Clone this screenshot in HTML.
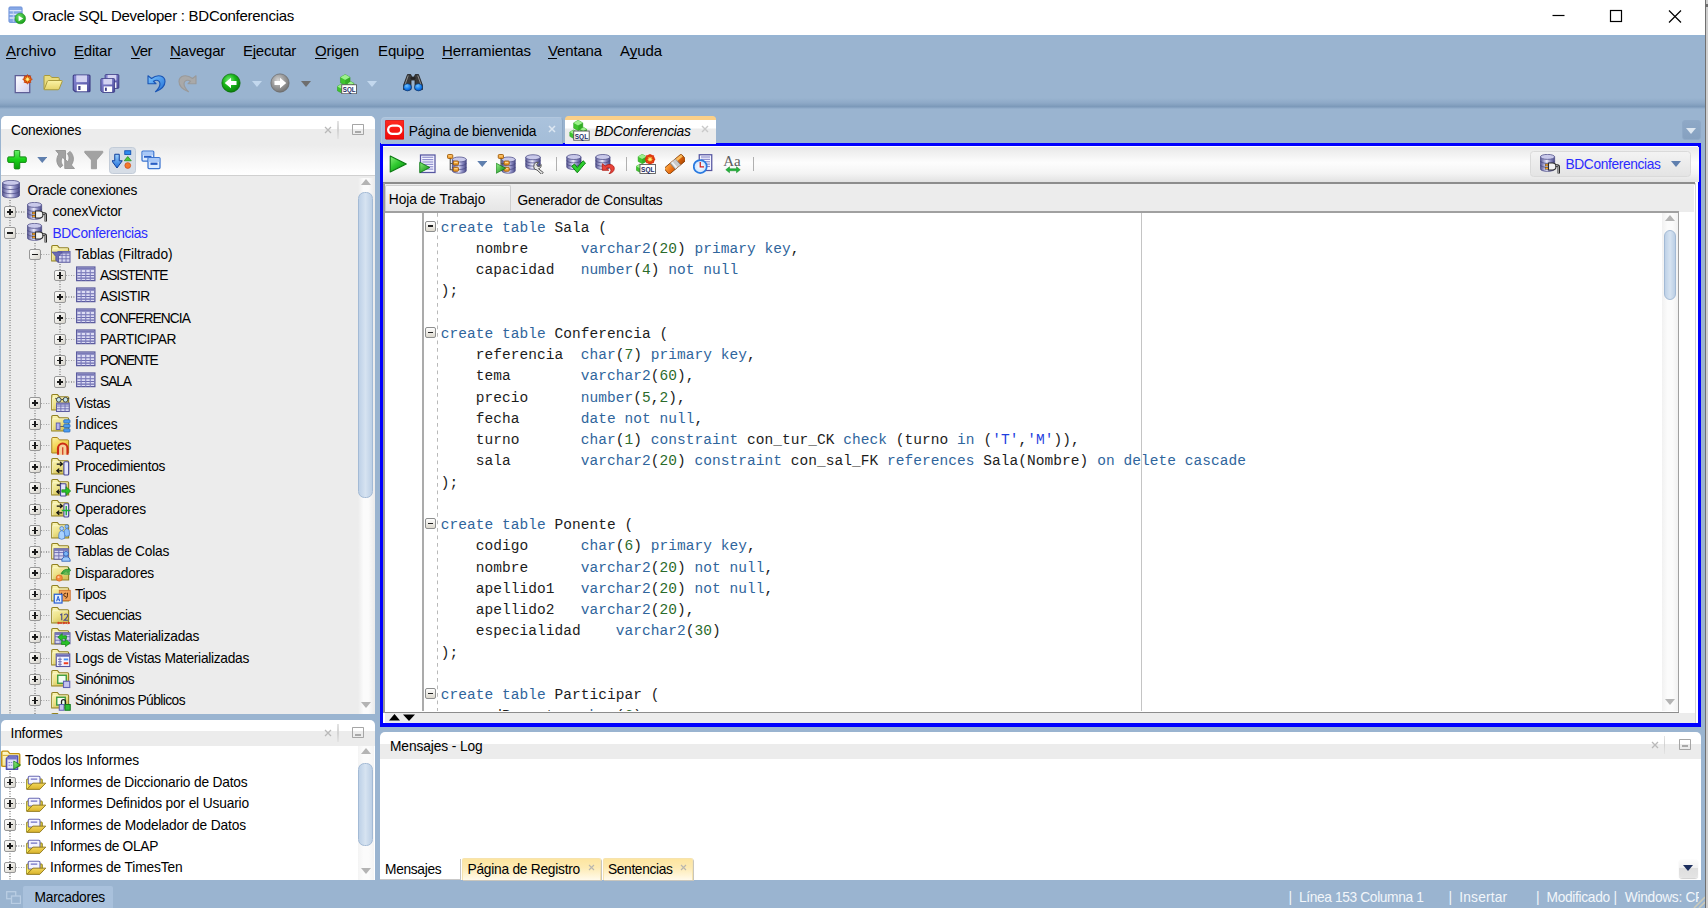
<!DOCTYPE html>
<html lang="es"><head><meta charset="utf-8"><title>Oracle SQL Developer : BDConferencias</title>
<style>
html,body{margin:0;padding:0}
body{width:1708px;height:908px;position:relative;overflow:hidden;background:#9ab4d0;font-family:"Liberation Sans", sans-serif;font-size:13.75px;color:#000}
div,span.t,svg.i{position:absolute;box-sizing:border-box}
span.t{white-space:pre;line-height:20px}
u{text-decoration:underline;text-decoration-skip-ink:none;text-decoration-thickness:1.2px;text-underline-offset:1.5px}

.ex{width:11.5px;height:11.5px;border:1px solid #979797;border-radius:2px;background:linear-gradient(135deg,#fff,#d8d5cc)}
.ex i{position:absolute;left:1.6px;top:4.05px;width:6.3px;height:1.4px;background:#1a1a1a}
.ex b{position:absolute;left:4.05px;top:1.6px;width:1.4px;height:6.3px;background:#1a1a1a}
.dv{width:1.25px;background-image:linear-gradient(#9a9a9a 50%,transparent 50%);background-size:1.25px 2.5px}
.dh{height:1.25px;background-image:linear-gradient(90deg,#9a9a9a 50%,transparent 50%);background-size:2.5px 1.25px}
.fd{width:1.25px;background-image:linear-gradient(#b9b9b9 50%,transparent 50%);background-size:1.25px 7.5px}
.code{font-family:"Liberation Mono", monospace;font-size:14.5px;letter-spacing:0.05px;line-height:21.25px;color:#1c1c1c}
.code div{position:static;height:21.25px;white-space:pre}
.k{color:#2f659c} .n{color:#2b6b2b} .s{color:#1f3fe0}
.fb{width:11px;height:11px;border:1px solid #8e8f8f;border-radius:2px;background:linear-gradient(#fff,#dcd8cd)}
.fb i{position:absolute;left:1.7px;top:3.9px;width:5.6px;height:1.3px;background:#222}

</style></head><body>
<div style="left:0px;top:0px;width:1705px;height:35.3px;background:#fff"></div>
<div style="left:0px;top:35px;width:1705px;height:1.6px;background:#96b4d3"></div>
<span class="t" style="left:32px;top:6.30px;font-size:15px;letter-spacing:-0.272px;">Oracle SQL Developer : BDConferencias</span>
<div style="left:1705px;top:0px;width:3px;height:908px;background:#cfcfcf"></div>
<div style="left:1704.5px;top:0px;width:1.5px;height:908px;background:#707070"></div>
<div style="left:1705px;top:4px;width:3px;height:2.5px;background:#6f6f6f"></div>
<svg class="i" style="left:1540px;top:0" width="160" height="34" viewBox="0 0 160 34"><g stroke="#000" stroke-width="1.2" fill="none"><path d="M12.5 15.5h12"/><rect x="70.5" y="10.5" width="11" height="11"/><path d="M129 10.5l12 12M141 10.5l-12 12"/></g></svg>
<span class="t" style="left:6px;top:41.10px;font-size:15px;letter-spacing:-0.004px;"><u>A</u>rchivo</span>
<span class="t" style="left:74px;top:41.10px;font-size:15px;letter-spacing:-0.198px;"><u>E</u>ditar</span>
<span class="t" style="left:131px;top:41.10px;font-size:15px;letter-spacing:-0.505px;"><u>V</u>er</span>
<span class="t" style="left:170px;top:41.10px;font-size:15px;letter-spacing:-0.243px;"><u>N</u>avegar</span>
<span class="t" style="left:243px;top:41.10px;font-size:15px;letter-spacing:-0.254px;">E<u>j</u>ecutar</span>
<span class="t" style="left:315px;top:41.10px;font-size:15px;letter-spacing:-0.172px;"><u>O</u>rigen</span>
<span class="t" style="left:378px;top:41.10px;font-size:15px;letter-spacing:-0.120px;">Equip<u>o</u></span>
<span class="t" style="left:442px;top:41.10px;font-size:15px;letter-spacing:-0.086px;"><u>H</u>erramientas</span>
<span class="t" style="left:548px;top:41.10px;font-size:15px;letter-spacing:-0.152px;"><u>V</u>entana</span>
<span class="t" style="left:620px;top:41.10px;font-size:15px;letter-spacing:-0.053px;">A<u>y</u>uda</span>
<div style="left:0px;top:98px;width:1705px;height:10.5px;background:linear-gradient(#9ab4d0,#8ea9c7 45%,#7c99b9 78%,#8aa6c5 90%,#9ab4d0)"></div>
<div style="left:0.8px;top:116px;width:374px;height:598px;background:#ececec;border-radius:5px 5px 0 0"></div>
<div style="left:0.8px;top:116px;width:374px;height:13px;background:#fff;border-radius:5px 5px 0 0"></div>
<div style="left:0.8px;top:145px;width:374px;height:30px;background:linear-gradient(#ececec,#fff)"></div>
<div style="left:0.8px;top:175px;width:374px;height:1px;background:#d0d0d0"></div>
<span class="t" style="left:11px;top:120.54px;letter-spacing:-0.263px;">Conexiones</span>
<div style="left:0.8px;top:719.5px;width:374px;height:160.5px;background:#fff;border-radius:5px 5px 0 0"></div>
<div style="left:0.8px;top:731.4px;width:374px;height:14.5px;background:#ececec"></div>
<span class="t" style="left:10.5px;top:723.54px;letter-spacing:-0.188px;">Informes</span>
<div style="left:379.6px;top:143.4px;width:1321.9px;height:583.4px;background:#fff"></div>
<div style="left:379.6px;top:143.4px;width:1321.9px;height:2.8px;background:#0000ff"></div>
<div style="left:379.6px;top:723.3px;width:1321.9px;height:3.5px;background:#0000ff"></div>
<div style="left:379.6px;top:143.4px;width:3.4px;height:583.4px;background:#0000ff"></div>
<div style="left:1698.3px;top:143.4px;width:3.2px;height:583.4px;background:#0000ff"></div>
<div style="left:380px;top:732.3px;width:1321px;height:148px;background:#fff;border-radius:5px 5px 0 0"></div>
<div style="left:380px;top:744.3px;width:1321px;height:14.7px;background:#ececec"></div>
<span class="t" style="left:390px;top:736.74px;letter-spacing:-0.108px;">Mensajes - Log</span>
<div style="left:1.5px;top:176px;width:356px;height:538px;overflow:hidden">
<div class="dv" style="left:7.9px;top:24px;width:1.25px;height:520px;"></div>
<div class="dv" style="left:32.9px;top:67px;width:1.25px;height:477px;"></div>
<div class="dv" style="left:57.9px;top:88px;width:1.25px;height:117.5px;"></div>
<svg class="i" style="left:0.5px;top:3.9999999999999947px;" width="20" height="20" viewBox="0 0 16 16"><defs><linearGradient id="g1_c" x1="0" y1="0" x2="1" y2="0"><stop offset="0" stop-color="#55558f"/><stop offset="0.3" stop-color="#b9b9e0"/><stop offset="0.45" stop-color="#ececfb"/><stop offset="0.7" stop-color="#8f8fc6"/><stop offset="1" stop-color="#4a4a86"/></linearGradient></defs><path d="M0.4 2.3v10.0a6.8 2.0 0 0 0 13.6 0v-10.0z" fill="url(#g1_c)" stroke="#4b4b85" stroke-width="0.6"/><ellipse cx="7.2" cy="2.3" rx="6.8" ry="2.0" fill="#c9c9ea" stroke="#4b4b85" stroke-width="0.6"/><path d="M0.4 5.633333333333333a6.8 2.0 0 0 0 13.6 0" fill="none" stroke="#45457e" stroke-width="0.7" opacity="0.8"/><path d="M0.4 8.966666666666667a6.8 2.0 0 0 0 13.6 0" fill="none" stroke="#45457e" stroke-width="0.7" opacity="0.8"/></svg>
<span class="t" style="left:26.0px;top:5.14px;letter-spacing:-0.258px;">Oracle conexiones</span>
<div class="dh" style="left:14.5px;top:35.24999999999999px;width:10.0px;height:1.25px;"></div>
<div class="ex" style="left:2.75px;top:30.099999999999994px"><i></i><b></b></div>
<svg class="i" style="left:25.5px;top:25.849999999999994px;" width="20" height="20" viewBox="0 0 16 16"><defs><linearGradient id="g2_c" x1="0" y1="0" x2="1" y2="0"><stop offset="0" stop-color="#55558f"/><stop offset="0.3" stop-color="#b9b9e0"/><stop offset="0.45" stop-color="#ececfb"/><stop offset="0.7" stop-color="#8f8fc6"/><stop offset="1" stop-color="#4a4a86"/></linearGradient></defs><path d="M0.3 2.3v9.6a5.7 2.0 0 0 0 11.4 0v-9.6z" fill="url(#g2_c)" stroke="#4b4b85" stroke-width="0.6"/><ellipse cx="6.0" cy="2.3" rx="5.7" ry="2.0" fill="#c9c9ea" stroke="#4b4b85" stroke-width="0.6"/><path d="M0.3 5.5a5.7 2.0 0 0 0 11.4 0" fill="none" stroke="#45457e" stroke-width="0.7" opacity="0.8"/><path d="M0.3 8.7a5.7 2.0 0 0 0 11.4 0" fill="none" stroke="#45457e" stroke-width="0.7" opacity="0.8"/><path d="M4 8.7h3M4 11.3h3" stroke="#3a3a3a" stroke-width="2"/><path d="M4.3 8.700h2.700M4.300 11.300h2.700" stroke="#ffa424" stroke-width="1.200"/><path d="M6.800 7.200h3.200a2.800 2.800 0 0 1 0 5.600h-3.200z" fill="#f2f2f2" stroke="#2e2e2e" stroke-width="0.9"/><path d="M12.400 9.200h1.400q1.200 0 1.200 1.200v5.200" fill="none" stroke="#2a2a2a" stroke-width="2"/><path d="M12.600 9.200h1.200q1 0 1 1.200v5" fill="none" stroke="#a9a9a9" stroke-width="0.7"/></svg>
<span class="t" style="left:51.0px;top:26.29px;letter-spacing:-0.190px;">conexVictor</span>
<div class="dh" style="left:14.5px;top:56.49999999999999px;width:10.0px;height:1.25px;"></div>
<div class="ex" style="left:2.75px;top:51.349999999999994px"><i></i></div>
<svg class="i" style="left:25.5px;top:47.099999999999994px;" width="20" height="20" viewBox="0 0 16 16"><defs><linearGradient id="g3_c" x1="0" y1="0" x2="1" y2="0"><stop offset="0" stop-color="#55558f"/><stop offset="0.3" stop-color="#b9b9e0"/><stop offset="0.45" stop-color="#ececfb"/><stop offset="0.7" stop-color="#8f8fc6"/><stop offset="1" stop-color="#4a4a86"/></linearGradient></defs><path d="M0.3 2.3v9.6a5.7 2.0 0 0 0 11.4 0v-9.6z" fill="url(#g3_c)" stroke="#4b4b85" stroke-width="0.6"/><ellipse cx="6.0" cy="2.3" rx="5.7" ry="2.0" fill="#c9c9ea" stroke="#4b4b85" stroke-width="0.6"/><path d="M0.3 5.5a5.7 2.0 0 0 0 11.4 0" fill="none" stroke="#45457e" stroke-width="0.7" opacity="0.8"/><path d="M0.3 8.7a5.7 2.0 0 0 0 11.4 0" fill="none" stroke="#45457e" stroke-width="0.7" opacity="0.8"/><path d="M4 8.7h3M4 11.3h3" stroke="#3a3a3a" stroke-width="2"/><path d="M4.3 8.700h2.700M4.300 11.300h2.700" stroke="#ffa424" stroke-width="1.200"/><path d="M6.800 7.200h3.200a2.800 2.800 0 0 1 0 5.600h-3.200z" fill="#f2f2f2" stroke="#2e2e2e" stroke-width="0.9"/><path d="M12.400 9.200h1.400q1.200 0 1.200 1.200v5.200" fill="none" stroke="#2a2a2a" stroke-width="2"/><path d="M12.600 9.200h1.200q1 0 1 1.200v5" fill="none" stroke="#a9a9a9" stroke-width="0.7"/></svg>
<span class="t" style="left:51.0px;top:47.54px;color:#2b2bff;letter-spacing:-0.366px;">BDConferencias</span>
<div class="dh" style="left:39.5px;top:77.75px;width:9.0px;height:1.25px;"></div>
<div class="ex" style="left:27.75px;top:72.6px"><i></i></div>
<svg class="i" style="left:49.5px;top:68.35px;" width="20" height="20" viewBox="0 0 16 16"><defs><linearGradient id="g4_f" x1="0" y1="0" x2="0.6" y2="1"><stop offset="0" stop-color="#fbf6b8"/><stop offset="0.55" stop-color="#eee38a"/><stop offset="1" stop-color="#d4c35a"/></linearGradient></defs><path d="M0.6 13.6V2.1q0-0.9 0.9-0.9h3.6l1.6 1.9h6.5q0.9 0 0.9 0.9v9.6z" fill="url(#g4_f)" stroke="#918020" stroke-width="0.9"/><path d="M1.2 13V3.8h12.3" fill="none" stroke="#fffde0" stroke-width="0.6" opacity="0.8"/><rect x="5.6" y="6" width="9.6" height="8.6" fill="#d5d5f0" stroke="#5b5b9e" stroke-width="0.8"/><path d="M5.6 9.096h9.6M5.6 11.847999999999999h9.6M8.864 6v8.6M12.032 6v8.6" stroke="#6b6bb0" stroke-width="0.7"/><rect x="5.6" y="6" width="9.6" height="1.72" fill="#7676b6"/><path d="M0.8 6.4h8.2l-3 3.6v4.4l-2.2-1.2v-3.2z" fill="#6a6ab4" stroke="#4a4a90" stroke-width="0.5"/></svg>
<span class="t" style="left:73.5px;top:68.79px;letter-spacing:-0.063px;">Tablas (Filtrado)</span>
<div class="dh" style="left:64.5px;top:99.00000000000003px;width:9.0px;height:1.25px;"></div>
<div class="ex" style="left:52.75px;top:93.85000000000002px"><i></i><b></b></div>
<svg class="i" style="left:74.5px;top:89.60000000000002px;" width="20" height="20" viewBox="0 0 16 16"><g transform="translate(0,-0.1)"><rect x="0.5" y="0.9" width="14.6" height="10.900" fill="#dcdcf4" stroke="#5b5b9e" stroke-width="1"/><rect x="1" y="1.4" width="13.6" height="1.7" fill="#7a7ab8"/><path d="M1 5.500h13.6M1 7.700h13.6M1 9.800h13.6" stroke="#6b6bb0" stroke-width="0.9"/><path d="M4.1 3v8.800M7.8 3v8.800M11.4 3v8.800" stroke="#7d7dbd" stroke-width="0.9"/></g></svg>
<span class="t" style="left:98.5px;top:90.04px;letter-spacing:-0.990px;">ASISTENTE</span>
<div class="dh" style="left:64.5px;top:120.25000000000003px;width:9.0px;height:1.25px;"></div>
<div class="ex" style="left:52.75px;top:115.10000000000002px"><i></i><b></b></div>
<svg class="i" style="left:74.5px;top:110.85000000000002px;" width="20" height="20" viewBox="0 0 16 16"><g transform="translate(0,-0.1)"><rect x="0.5" y="0.9" width="14.6" height="10.900" fill="#dcdcf4" stroke="#5b5b9e" stroke-width="1"/><rect x="1" y="1.4" width="13.6" height="1.7" fill="#7a7ab8"/><path d="M1 5.500h13.6M1 7.700h13.6M1 9.800h13.6" stroke="#6b6bb0" stroke-width="0.9"/><path d="M4.1 3v8.800M7.8 3v8.800M11.4 3v8.800" stroke="#7d7dbd" stroke-width="0.9"/></g></svg>
<span class="t" style="left:98.5px;top:111.29px;letter-spacing:-0.569px;">ASISTIR</span>
<div class="dh" style="left:64.5px;top:141.50000000000003px;width:9.0px;height:1.25px;"></div>
<div class="ex" style="left:52.75px;top:136.35000000000002px"><i></i><b></b></div>
<svg class="i" style="left:74.5px;top:132.10000000000002px;" width="20" height="20" viewBox="0 0 16 16"><g transform="translate(0,-0.1)"><rect x="0.5" y="0.9" width="14.6" height="10.900" fill="#dcdcf4" stroke="#5b5b9e" stroke-width="1"/><rect x="1" y="1.4" width="13.6" height="1.7" fill="#7a7ab8"/><path d="M1 5.500h13.6M1 7.700h13.6M1 9.800h13.6" stroke="#6b6bb0" stroke-width="0.9"/><path d="M4.1 3v8.800M7.8 3v8.800M11.4 3v8.800" stroke="#7d7dbd" stroke-width="0.9"/></g></svg>
<span class="t" style="left:98.5px;top:132.54px;letter-spacing:-0.916px;">CONFERENCIA</span>
<div class="dh" style="left:64.5px;top:162.75000000000003px;width:9.0px;height:1.25px;"></div>
<div class="ex" style="left:52.75px;top:157.60000000000002px"><i></i><b></b></div>
<svg class="i" style="left:74.5px;top:153.35000000000002px;" width="20" height="20" viewBox="0 0 16 16"><g transform="translate(0,-0.1)"><rect x="0.5" y="0.9" width="14.6" height="10.900" fill="#dcdcf4" stroke="#5b5b9e" stroke-width="1"/><rect x="1" y="1.4" width="13.6" height="1.7" fill="#7a7ab8"/><path d="M1 5.500h13.6M1 7.700h13.6M1 9.800h13.6" stroke="#6b6bb0" stroke-width="0.9"/><path d="M4.1 3v8.800M7.8 3v8.800M11.4 3v8.800" stroke="#7d7dbd" stroke-width="0.9"/></g></svg>
<span class="t" style="left:98.5px;top:153.79px;letter-spacing:-0.423px;">PARTICIPAR</span>
<div class="dh" style="left:64.5px;top:184.00000000000003px;width:9.0px;height:1.25px;"></div>
<div class="ex" style="left:52.75px;top:178.85000000000002px"><i></i><b></b></div>
<svg class="i" style="left:74.5px;top:174.60000000000002px;" width="20" height="20" viewBox="0 0 16 16"><g transform="translate(0,-0.1)"><rect x="0.5" y="0.9" width="14.6" height="10.900" fill="#dcdcf4" stroke="#5b5b9e" stroke-width="1"/><rect x="1" y="1.4" width="13.6" height="1.7" fill="#7a7ab8"/><path d="M1 5.500h13.6M1 7.700h13.6M1 9.800h13.6" stroke="#6b6bb0" stroke-width="0.9"/><path d="M4.1 3v8.800M7.8 3v8.800M11.4 3v8.800" stroke="#7d7dbd" stroke-width="0.9"/></g></svg>
<span class="t" style="left:98.5px;top:175.04px;letter-spacing:-1.281px;">PONENTE</span>
<div class="dh" style="left:64.5px;top:205.25000000000003px;width:9.0px;height:1.25px;"></div>
<div class="ex" style="left:52.75px;top:200.10000000000002px"><i></i><b></b></div>
<svg class="i" style="left:74.5px;top:195.85000000000002px;" width="20" height="20" viewBox="0 0 16 16"><g transform="translate(0,-0.1)"><rect x="0.5" y="0.9" width="14.6" height="10.900" fill="#dcdcf4" stroke="#5b5b9e" stroke-width="1"/><rect x="1" y="1.4" width="13.6" height="1.7" fill="#7a7ab8"/><path d="M1 5.500h13.6M1 7.700h13.6M1 9.800h13.6" stroke="#6b6bb0" stroke-width="0.9"/><path d="M4.1 3v8.800M7.8 3v8.800M11.4 3v8.800" stroke="#7d7dbd" stroke-width="0.9"/></g></svg>
<span class="t" style="left:98.5px;top:196.29px;letter-spacing:-1.043px;">SALA</span>
<div class="dh" style="left:39.5px;top:226.50000000000003px;width:9.0px;height:1.25px;"></div>
<div class="ex" style="left:27.75px;top:221.35000000000002px"><i></i><b></b></div>
<svg class="i" style="left:49.5px;top:217.10000000000002px;" width="20" height="20" viewBox="0 0 16 16"><defs><linearGradient id="g11_f" x1="0" y1="0" x2="0.6" y2="1"><stop offset="0" stop-color="#fbf6b8"/><stop offset="0.55" stop-color="#eee38a"/><stop offset="1" stop-color="#d4c35a"/></linearGradient></defs><path d="M0.6 13.6V2.1q0-0.9 0.9-0.9h3.6l1.6 1.9h6.5q0.9 0 0.9 0.9v9.6z" fill="url(#g11_f)" stroke="#918020" stroke-width="0.9"/><path d="M1.2 13V3.8h12.3" fill="none" stroke="#fffde0" stroke-width="0.6" opacity="0.8"/><rect x="4.4" y="8" width="10.2" height="6.8" fill="#d5d5f0" stroke="#5b5b9e" stroke-width="0.8"/><path d="M4.4 10.448h10.2M4.4 12.624h10.2M7.868 8v6.8M11.234 8v6.8" stroke="#6b6bb0" stroke-width="0.7"/><rect x="4.4" y="8" width="10.2" height="1.36" fill="#7676b6"/><circle cx="6.2" cy="5.4" r="1.9" fill="#bfe3ea" stroke="#444" stroke-width="0.8"/><circle cx="11.6" cy="5.4" r="1.9" fill="#bfe3ea" stroke="#444" stroke-width="0.8"/><path d="M8.1 5.2h1.6M3.4 4.2l1.2 0.6M14.6 4.2l-1.2 0.6" stroke="#444" stroke-width="0.8"/></svg>
<span class="t" style="left:73.5px;top:217.54px;letter-spacing:-0.367px;">Vistas</span>
<div class="dh" style="left:39.5px;top:247.75000000000003px;width:9.0px;height:1.25px;"></div>
<div class="ex" style="left:27.75px;top:242.60000000000002px"><i></i><b></b></div>
<svg class="i" style="left:49.5px;top:238.35000000000002px;" width="20" height="20" viewBox="0 0 16 16"><defs><linearGradient id="g12_f" x1="0" y1="0" x2="0.6" y2="1"><stop offset="0" stop-color="#fbf6b8"/><stop offset="0.55" stop-color="#eee38a"/><stop offset="1" stop-color="#d4c35a"/></linearGradient></defs><path d="M0.6 13.6V2.1q0-0.9 0.9-0.9h3.6l1.6 1.9h6.5q0.9 0 0.9 0.9v9.6z" fill="url(#g12_f)" stroke="#918020" stroke-width="0.9"/><path d="M1.2 13V3.8h12.3" fill="none" stroke="#fffde0" stroke-width="0.6" opacity="0.8"/><rect x="4.2" y="7.2" width="3" height="5.2" fill="#b3b3ee" stroke="#5555a8" stroke-width="0.7"/><path d="M7.4 10h3" stroke="#555" stroke-width="0.7"/><rect x="10.2" y="4.6" width="5" height="2.6" rx="0.6" fill="#4d9df0" stroke="#2065b8" stroke-width="0.6"/><rect x="10.2" y="8.2" width="5" height="2.6" rx="0.6" fill="#4d9df0" stroke="#2065b8" stroke-width="0.6"/><rect x="10.2" y="11.8" width="5" height="2.6" rx="0.6" fill="#4d9df0" stroke="#2065b8" stroke-width="0.6"/></svg>
<span class="t" style="left:73.5px;top:238.79px;letter-spacing:-0.154px;">Índices</span>
<div class="dh" style="left:39.5px;top:269.0px;width:9.0px;height:1.25px;"></div>
<div class="ex" style="left:27.75px;top:263.85px"><i></i><b></b></div>
<svg class="i" style="left:49.5px;top:259.6px;" width="20" height="20" viewBox="0 0 16 16"><defs><linearGradient id="g13_f" x1="0" y1="0" x2="0.6" y2="1"><stop offset="0" stop-color="#fdf3a0"/><stop offset="0.5" stop-color="#f4d75a"/><stop offset="1" stop-color="#dcae2c"/></linearGradient></defs><path d="M0.6 13.6V2.1q0-0.9 0.9-0.9h3.6l1.6 1.9h6.5q0.9 0 0.9 0.9v9.6z" fill="url(#g13_f)" stroke="#a8841f" stroke-width="0.8"/><path d="M5.6 15V9.8a3.8 3.8 0 0 1 7.6 0V15" fill="#f6cf9a" stroke="#cc2a14" stroke-width="1.7"/><path d="M9.4 9v6" stroke="#cc2a14" stroke-width="0.9"/></svg>
<span class="t" style="left:73.5px;top:260.04px;letter-spacing:-0.264px;">Paquetes</span>
<div class="dh" style="left:39.5px;top:290.25px;width:9.0px;height:1.25px;"></div>
<div class="ex" style="left:27.75px;top:285.1px"><i></i><b></b></div>
<svg class="i" style="left:49.5px;top:280.85px;" width="20" height="20" viewBox="0 0 16 16"><defs><linearGradient id="g14_f" x1="0" y1="0" x2="0.6" y2="1"><stop offset="0" stop-color="#fbf6b8"/><stop offset="0.55" stop-color="#eee38a"/><stop offset="1" stop-color="#d4c35a"/></linearGradient></defs><path d="M0.6 13.6V2.1q0-0.9 0.9-0.9h3.6l1.6 1.9h6.5q0.9 0 0.9 0.9v9.6z" fill="url(#g14_f)" stroke="#918020" stroke-width="0.9"/><path d="M1.2 13V3.8h12.3" fill="none" stroke="#fffde0" stroke-width="0.6" opacity="0.8"/><path d="M4.6 5.6h4.2M7.2 3.9l1.9 1.7-1.9 1.7M9 11h-4.2M6.6 9.3l-1.9 1.7 1.9 1.7" fill="none" stroke="#111" stroke-width="1"/><rect x="10.3" y="3.8" width="3.8" height="10.6" rx="0.8" fill="#e4e4fb" stroke="#4a4a98" stroke-width="0.9"/></svg>
<span class="t" style="left:73.5px;top:281.29px;letter-spacing:-0.342px;">Procedimientos</span>
<div class="dh" style="left:39.5px;top:311.5px;width:9.0px;height:1.25px;"></div>
<div class="ex" style="left:27.75px;top:306.35px"><i></i><b></b></div>
<svg class="i" style="left:49.5px;top:302.1px;" width="20" height="20" viewBox="0 0 16 16"><defs><linearGradient id="g15_f" x1="0" y1="0" x2="0.6" y2="1"><stop offset="0" stop-color="#fbf6b8"/><stop offset="0.55" stop-color="#eee38a"/><stop offset="1" stop-color="#d4c35a"/></linearGradient></defs><path d="M0.6 13.6V2.1q0-0.9 0.9-0.9h3.6l1.6 1.9h6.5q0.9 0 0.9 0.9v9.6z" fill="url(#g15_f)" stroke="#918020" stroke-width="0.9"/><path d="M1.2 13V3.8h12.3" fill="none" stroke="#fffde0" stroke-width="0.6" opacity="0.8"/><path d="M4.6 5.6h4.2M7.2 3.9l1.9 1.7-1.9 1.7M9 11h-4.2M6.6 9.3l-1.9 1.7 1.9 1.7" fill="none" stroke="#111" stroke-width="1"/><rect x="7.6" y="4.6" width="4.4" height="9.8" rx="0.6" fill="#e4e4fb" stroke="#4a4a98" stroke-width="0.9"/><path d="M8.6 9.4h3.4v-2.4l3.8 3.4-3.8 3.4v-2.4h-3.4z" fill="#28c128" stroke="#148414" stroke-width="0.5"/></svg>
<span class="t" style="left:73.5px;top:302.54px;letter-spacing:-0.384px;">Funciones</span>
<div class="dh" style="left:39.5px;top:332.75px;width:9.0px;height:1.25px;"></div>
<div class="ex" style="left:27.75px;top:327.6px"><i></i><b></b></div>
<svg class="i" style="left:49.5px;top:323.35px;" width="20" height="20" viewBox="0 0 16 16"><defs><linearGradient id="g16_f" x1="0" y1="0" x2="0.6" y2="1"><stop offset="0" stop-color="#fbf6b8"/><stop offset="0.55" stop-color="#eee38a"/><stop offset="1" stop-color="#d4c35a"/></linearGradient></defs><path d="M0.6 13.6V2.1q0-0.9 0.9-0.9h3.6l1.6 1.9h6.5q0.9 0 0.9 0.9v9.6z" fill="url(#g16_f)" stroke="#918020" stroke-width="0.9"/><path d="M1.2 13V3.8h12.3" fill="none" stroke="#fffde0" stroke-width="0.6" opacity="0.8"/><path d="M4.6 5.6h4.2M7.2 3.9l1.9 1.7-1.9 1.7M9 11h-4.2M6.6 9.3l-1.9 1.7 1.9 1.7" fill="none" stroke="#111" stroke-width="1"/><rect x="10.3" y="3.8" width="3.8" height="10.6" rx="0.8" fill="#e4e4fb" stroke="#4a4a98" stroke-width="0.9"/><path d="M8.6 9.2h7M12.2 5.6v7.4" stroke="#1eae3c" stroke-width="1.1"/></svg>
<span class="t" style="left:73.5px;top:323.79px;letter-spacing:-0.163px;">Operadores</span>
<div class="dh" style="left:39.5px;top:354.0px;width:9.0px;height:1.25px;"></div>
<div class="ex" style="left:27.75px;top:348.85px"><i></i><b></b></div>
<svg class="i" style="left:49.5px;top:344.6px;" width="20" height="20" viewBox="0 0 16 16"><defs><linearGradient id="g17_f" x1="0" y1="0" x2="0.6" y2="1"><stop offset="0" stop-color="#fbf6b8"/><stop offset="0.55" stop-color="#eee38a"/><stop offset="1" stop-color="#d4c35a"/></linearGradient></defs><path d="M0.6 13.6V2.1q0-0.9 0.9-0.9h3.6l1.6 1.9h6.5q0.9 0 0.9 0.9v9.6z" fill="url(#g17_f)" stroke="#918020" stroke-width="0.9"/><path d="M1.2 13V3.8h12.3" fill="none" stroke="#fffde0" stroke-width="0.6" opacity="0.8"/><circle cx="12.6" cy="4.425" r="1.4249999999999998" fill="#8cc0fa" stroke="#2c66c8" stroke-width="0.5"/><path d="M10.51 11.549999999999999q-0.57 -5.319999999999999 2.09 -5.51q2.6599999999999997 0.19 2.09 5.51q-2.09 1.52 -4.18 0z" fill="#8cc0fa" stroke="#2c66c8" stroke-width="0.5"/><circle cx="8.6" cy="5.9750000000000005" r="1.5750000000000002" fill="#a9d2ff" stroke="#2c66c8" stroke-width="0.5"/><path d="M6.289999999999999 13.850000000000001q-0.63 -5.88 2.3100000000000005 -6.09q2.94 0.21000000000000002 2.3100000000000005 6.09q-2.3100000000000005 1.6800000000000002 -4.620000000000001 0z" fill="#a9d2ff" stroke="#2c66c8" stroke-width="0.5"/></svg>
<span class="t" style="left:73.5px;top:345.04px;letter-spacing:-0.531px;">Colas</span>
<div class="dh" style="left:39.5px;top:375.25px;width:9.0px;height:1.25px;"></div>
<div class="ex" style="left:27.75px;top:370.1px"><i></i><b></b></div>
<svg class="i" style="left:49.5px;top:365.85px;" width="20" height="20" viewBox="0 0 16 16"><defs><linearGradient id="g18_f" x1="0" y1="0" x2="0.6" y2="1"><stop offset="0" stop-color="#fbf6b8"/><stop offset="0.55" stop-color="#eee38a"/><stop offset="1" stop-color="#d4c35a"/></linearGradient></defs><path d="M0.6 13.6V2.1q0-0.9 0.9-0.9h3.6l1.6 1.9h6.5q0.9 0 0.9 0.9v9.6z" fill="url(#g18_f)" stroke="#918020" stroke-width="0.9"/><path d="M1.2 13V3.8h12.3" fill="none" stroke="#fffde0" stroke-width="0.6" opacity="0.8"/><rect x="2.4" y="5.4" width="11.4" height="8.4" fill="#d5d5f0" stroke="#5b5b9e" stroke-width="0.8"/><path d="M2.4 8.424h11.4M2.4 11.112000000000002h11.4M6.276 5.4v8.4M10.038 5.4v8.4" stroke="#6b6bb0" stroke-width="0.7"/><rect x="2.4" y="5.4" width="11.4" height="1.6800000000000002" fill="#7676b6"/><circle cx="12" cy="9.4" r="1.9" fill="#7db6f6" stroke="#1f58b6" stroke-width="0.6"/><path d="M8.6 15.4q0-3.6 3.4-3.6t3.4 3.6z" fill="#9cc8fa" stroke="#1f58b6" stroke-width="0.6"/></svg>
<span class="t" style="left:73.5px;top:366.29px;letter-spacing:-0.256px;">Tablas de Colas</span>
<div class="dh" style="left:39.5px;top:396.5px;width:9.0px;height:1.25px;"></div>
<div class="ex" style="left:27.75px;top:391.35px"><i></i><b></b></div>
<svg class="i" style="left:49.5px;top:387.1px;" width="20" height="20" viewBox="0 0 16 16"><defs><linearGradient id="g19_f" x1="0" y1="0" x2="0.6" y2="1"><stop offset="0" stop-color="#fbf6b8"/><stop offset="0.55" stop-color="#eee38a"/><stop offset="1" stop-color="#d4c35a"/></linearGradient></defs><path d="M0.6 13.6V2.1q0-0.9 0.9-0.9h3.6l1.6 1.9h6.5q0.9 0 0.9 0.9v9.6z" fill="url(#g19_f)" stroke="#918020" stroke-width="0.9"/><path d="M1.2 13V3.8h12.3" fill="none" stroke="#fffde0" stroke-width="0.6" opacity="0.8"/><path d="M8 8.6q2.2-4.2 6.4-3.4l-0.6-1.6 2 2.4-2.8 1.6 0.6-1.3q-2.6-0.2-3.8 2.5z" fill="#36a83a" stroke="#1f7a24" stroke-width="0.6"/><path d="M9.2 7.2q2.6-2.8 6-1.6v4h-5z" fill="#49b04b" opacity="0.75"/><circle cx="6.6" cy="12" r="2.5" fill="#f58a3c" stroke="#d2601a" stroke-width="0.5"/><circle cx="6" cy="11.3" r="0.9" fill="#ffc79a"/></svg>
<span class="t" style="left:73.5px;top:387.54px;letter-spacing:-0.232px;">Disparadores</span>
<div class="dh" style="left:39.5px;top:417.75px;width:9.0px;height:1.25px;"></div>
<div class="ex" style="left:27.75px;top:412.6px"><i></i><b></b></div>
<svg class="i" style="left:49.5px;top:408.35px;" width="20" height="20" viewBox="0 0 16 16"><defs><linearGradient id="g20_f" x1="0" y1="0" x2="0.6" y2="1"><stop offset="0" stop-color="#fbf6b8"/><stop offset="0.55" stop-color="#eee38a"/><stop offset="1" stop-color="#d4c35a"/></linearGradient></defs><path d="M0.6 13.6V2.1q0-0.9 0.9-0.9h3.6l1.6 1.9h6.5q0.9 0 0.9 0.9v9.6z" fill="url(#g20_f)" stroke="#918020" stroke-width="0.9"/><path d="M1.2 13V3.8h12.3" fill="none" stroke="#fffde0" stroke-width="0.6" opacity="0.8"/><rect x="6.6" y="5" width="8.8" height="8.2" fill="#f2a25a" stroke="#c9692a" stroke-width="0.6"/><path d="M12.2 7.6a1.3 1.3 0 1 0 0 2.2M13.2 7v2.4q0 1.8-1.6 2" fill="none" stroke="#5a2c0c" stroke-width="0.8"/><path d="M8.4 7v4.4" stroke="#5a2c0c" stroke-width="0.8"/><rect x="2.6" y="8.2" width="6.2" height="7" fill="#e4efff" stroke="#2a62d6" stroke-width="1"/><path d="M4.4 13.8l1.3-4 1.3 4M4.9 12.6h1.7" fill="none" stroke="#2a62d6" stroke-width="0.8"/></svg>
<span class="t" style="left:73.5px;top:408.79px;letter-spacing:-0.425px;">Tipos</span>
<div class="dh" style="left:39.5px;top:439.0px;width:9.0px;height:1.25px;"></div>
<div class="ex" style="left:27.75px;top:433.85px"><i></i><b></b></div>
<svg class="i" style="left:49.5px;top:429.6px;" width="20" height="20" viewBox="0 0 16 16"><defs><linearGradient id="g21_f" x1="0" y1="0" x2="0.6" y2="1"><stop offset="0" stop-color="#fbf6b8"/><stop offset="0.55" stop-color="#eee38a"/><stop offset="1" stop-color="#d4c35a"/></linearGradient></defs><path d="M0.6 13.6V2.1q0-0.9 0.9-0.9h3.6l1.6 1.9h6.5q0.9 0 0.9 0.9v9.6z" fill="url(#g21_f)" stroke="#918020" stroke-width="0.9"/><path d="M1.2 13V3.8h12.3" fill="none" stroke="#fffde0" stroke-width="0.6" opacity="0.8"/><path d="M7.4 7.2l1.2-0.8v5M10.6 7.4q0.2-1 1.4-1t1.3 1.1q0 1.2-2.7 3.9h3" fill="none" stroke="#4c4c8a" stroke-width="0.9"/><path d="M5.2 13.6h10.4" stroke="#e02a1a" stroke-width="1.1" stroke-dasharray="1.4 0.7"/><path d="M6 12.6l1 1-1 1M10 12.6l1 1-1 1M13.6 12.6l1 1-1 1" stroke="#e02a1a" stroke-width="0.6" fill="none"/></svg>
<span class="t" style="left:73.5px;top:430.04px;letter-spacing:-0.509px;">Secuencias</span>
<div class="dh" style="left:39.5px;top:460.25px;width:9.0px;height:1.25px;"></div>
<div class="ex" style="left:27.75px;top:455.1px"><i></i><b></b></div>
<svg class="i" style="left:49.5px;top:450.85px;" width="20" height="20" viewBox="0 0 16 16"><defs><linearGradient id="g22_f" x1="0" y1="0" x2="0.6" y2="1"><stop offset="0" stop-color="#fbf6b8"/><stop offset="0.55" stop-color="#eee38a"/><stop offset="1" stop-color="#d4c35a"/></linearGradient></defs><path d="M0.6 13.6V2.1q0-0.9 0.9-0.9h3.6l1.6 1.9h6.5q0.9 0 0.9 0.9v9.6z" fill="url(#g22_f)" stroke="#918020" stroke-width="0.9"/><path d="M1.2 13V3.8h12.3" fill="none" stroke="#fffde0" stroke-width="0.6" opacity="0.8"/><rect x="3.2" y="4.6" width="12" height="8.8" fill="#d5d5f0" stroke="#5b5b9e" stroke-width="0.8"/><path d="M3.2 7.768h12M3.2 10.584h12M7.28 4.6v8.8M11.240000000000002 4.6v8.8" stroke="#6b6bb0" stroke-width="0.7"/><rect x="3.2" y="4.6" width="12" height="1.7600000000000002" fill="#7676b6"/><path d="M5.4 7.6h3.4v-1.8l3.6 3-3.6 3v-1.8h-3.4z" fill="#27c227" stroke="#0f7f14" stroke-width="0.5" transform="rotate(180 8.9 8.2) translate(0,-0.6)"/><path d="M8.4 11.4h3.2v-1.7l3.6 3-3.6 3v-1.7h-3.2z" fill="#27c227" stroke="#0f7f14" stroke-width="0.5"/></svg>
<span class="t" style="left:73.5px;top:451.29px;letter-spacing:-0.270px;">Vistas Materializadas</span>
<div class="dh" style="left:39.5px;top:481.5px;width:9.0px;height:1.25px;"></div>
<div class="ex" style="left:27.75px;top:476.35px"><i></i><b></b></div>
<svg class="i" style="left:49.5px;top:472.1px;" width="20" height="20" viewBox="0 0 16 16"><defs><linearGradient id="g23_f" x1="0" y1="0" x2="0.6" y2="1"><stop offset="0" stop-color="#fbf6b8"/><stop offset="0.55" stop-color="#eee38a"/><stop offset="1" stop-color="#d4c35a"/></linearGradient></defs><path d="M0.6 13.6V2.1q0-0.9 0.9-0.9h3.6l1.6 1.9h6.5q0.9 0 0.9 0.9v9.6z" fill="url(#g23_f)" stroke="#918020" stroke-width="0.9"/><path d="M1.2 13V3.8h12.3" fill="none" stroke="#fffde0" stroke-width="0.6" opacity="0.8"/><rect x="4.2" y="4.8" width="10.8" height="10" fill="#f4f4ff" stroke="#5656a2" stroke-width="0.9"/><rect x="4.6" y="5.2" width="10" height="1.8" fill="#6c6cb4"/><path d="M5.6 9h3M5.6 11h3M5.6 13h3M7.2 7.6v6.8" stroke="#6c6cb4" stroke-width="0.8"/><rect x="10.2" y="8.4" width="3.6" height="1.5" fill="#4a8ef0"/><rect x="10.2" y="11.4" width="3.6" height="1.6" fill="#ee3b20"/></svg>
<span class="t" style="left:73.5px;top:472.54px;letter-spacing:-0.290px;">Logs de Vistas Materializadas</span>
<div class="dh" style="left:39.5px;top:502.75px;width:9.0px;height:1.25px;"></div>
<div class="ex" style="left:27.75px;top:497.6px"><i></i><b></b></div>
<svg class="i" style="left:49.5px;top:493.35px;" width="20" height="20" viewBox="0 0 16 16"><defs><linearGradient id="g24_f" x1="0" y1="0" x2="0.6" y2="1"><stop offset="0" stop-color="#fbf6b8"/><stop offset="0.55" stop-color="#eee38a"/><stop offset="1" stop-color="#d4c35a"/></linearGradient></defs><path d="M0.6 13.6V2.1q0-0.9 0.9-0.9h3.6l1.6 1.9h6.5q0.9 0 0.9 0.9v9.6z" fill="url(#g24_f)" stroke="#918020" stroke-width="0.9"/><path d="M1.2 13V3.8h12.3" fill="none" stroke="#fffde0" stroke-width="0.6" opacity="0.8"/><rect x="5.4" y="5" width="6.8" height="6.4" fill="#f2fff2" stroke="#3a9a3e" stroke-width="1.1"/><rect x="10" y="9.8" width="5" height="5" fill="#c4c4ef" stroke="#6262b6" stroke-width="0.9"/></svg>
<span class="t" style="left:73.5px;top:493.79px;letter-spacing:-0.578px;">Sinónimos</span>
<div class="dh" style="left:39.5px;top:524.0px;width:9.0px;height:1.25px;"></div>
<div class="ex" style="left:27.75px;top:518.85px"><i></i><b></b></div>
<svg class="i" style="left:49.5px;top:514.6px;" width="20" height="20" viewBox="0 0 16 16"><defs><linearGradient id="g25_f" x1="0" y1="0" x2="0.6" y2="1"><stop offset="0" stop-color="#fbf6b8"/><stop offset="0.55" stop-color="#eee38a"/><stop offset="1" stop-color="#d4c35a"/></linearGradient></defs><path d="M0.6 13.6V2.1q0-0.9 0.9-0.9h3.6l1.6 1.9h6.5q0.9 0 0.9 0.9v9.6z" fill="url(#g25_f)" stroke="#918020" stroke-width="0.9"/><path d="M1.2 13V3.8h12.3" fill="none" stroke="#fffde0" stroke-width="0.6" opacity="0.8"/><rect x="4.6" y="5" width="6.8" height="6.2" fill="#f2fff2" stroke="#3a9a3e" stroke-width="1.1"/><path d="M8.4 11.6V8.4a1.6 1.6 0 0 1 3.2 0v3" fill="none" stroke="#222" stroke-width="1"/><rect x="6.6" y="10.8" width="3.8" height="4.6" fill="#c4c4ef" stroke="#6262b6" stroke-width="0.8"/><rect x="11.2" y="10.8" width="4.2" height="4.6" fill="#2fbf38" stroke="#127a1c" stroke-width="0.8"/></svg>
<span class="t" style="left:73.5px;top:515.04px;letter-spacing:-0.556px;">Sinónimos Públicos</span>
<svg class="i" style="left:49.5px;top:535.85px;" width="20" height="20" viewBox="0 0 16 16"><defs><linearGradient id="g26_f" x1="0" y1="0" x2="0.6" y2="1"><stop offset="0" stop-color="#fbf6b8"/><stop offset="0.55" stop-color="#eee38a"/><stop offset="1" stop-color="#d4c35a"/></linearGradient></defs><path d="M0.6 13.6V2.1q0-0.9 0.9-0.9h3.6l1.6 1.9h6.5q0.9 0 0.9 0.9v9.6z" fill="url(#g26_f)" stroke="#918020" stroke-width="0.9"/><path d="M1.2 13V3.8h12.3" fill="none" stroke="#fffde0" stroke-width="0.6" opacity="0.8"/></svg>
</div>
<div style="left:357.5px;top:177.5px;width:16.5px;height:536.5px;background:linear-gradient(90deg,#ececec,#fbfbfb 35%,#fbfbfb 65%,#ececec)"></div>
<svg class="i" style="left:360.75px;top:179.3px" width="10" height="6" viewBox="0 0 10 6"><path d="M0 6L5 0L10 6z" fill="#b4b4b4"/></svg>
<svg class="i" style="left:360.75px;top:701.5px" width="10" height="6" viewBox="0 0 10 6"><path d="M0 0L5 6L10 0z" fill="#b4b4b4"/></svg>
<div style="left:358.4px;top:192px;width:14.4px;height:305.5px;border:1.25px solid #a3bad5;border-radius:6.5px;background:linear-gradient(90deg,#bed1e7,#d6e3f1 50%,#bccfe5)"></div>
<div style="left:357.5px;top:746px;width:16.5px;height:134px;background:linear-gradient(90deg,#f4f4f4,#fbfbfb 35%,#fbfbfb 65%,#f4f4f4)"></div>
<svg class="i" style="left:360.75px;top:747.8px" width="10" height="6" viewBox="0 0 10 6"><path d="M0 6L5 0L10 6z" fill="#b4b4b4"/></svg>
<svg class="i" style="left:360.75px;top:867.5px" width="10" height="6" viewBox="0 0 10 6"><path d="M0 0L5 6L10 0z" fill="#b4b4b4"/></svg>
<div style="left:358.4px;top:762.5px;width:14.4px;height:83.5px;border:1.25px solid #a3bad5;border-radius:6.5px;background:linear-gradient(90deg,#bed1e7,#d6e3f1 50%,#bccfe5)"></div>
<svg class="i" style="left:324px;top:125.5px" width="8" height="8" viewBox="0 0 8 8"><path d="M1 1l6 6M7 1l-6 6" stroke="#b9b9b9" stroke-width="1.3"/></svg>
<div style="left:337.4px;top:120.5px;width:1.25px;height:18px;background:linear-gradient(#e4e4e4,#d2d2d2 50%,#e4e4e4)"></div>
<div style="left:352px;top:124.1px;width:12px;height:10.6px;border:1.25px solid #a6a6a6;border-radius:0.8px"></div>
<div style="left:355px;top:130.5px;width:6px;height:2px;background:#a9a9a9"></div>
<svg class="i" style="left:324px;top:728.5px" width="8" height="8" viewBox="0 0 8 8"><path d="M1 1l6 6M7 1l-6 6" stroke="#b9b9b9" stroke-width="1.3"/></svg>
<div style="left:337.4px;top:723.5px;width:1.25px;height:18px;background:linear-gradient(#e4e4e4,#d2d2d2 50%,#e4e4e4)"></div>
<div style="left:352px;top:727.1px;width:12px;height:10.6px;border:1.25px solid #a6a6a6;border-radius:0.8px"></div>
<div style="left:355px;top:733.5px;width:6px;height:2px;background:#a9a9a9"></div>
<svg class="i" style="left:1650.75px;top:741px" width="8" height="8" viewBox="0 0 8 8"><path d="M1 1l6 6M7 1l-6 6" stroke="#b9b9b9" stroke-width="1.3"/></svg>
<div style="left:1664.15px;top:736px;width:1.25px;height:18px;background:linear-gradient(#e4e4e4,#d2d2d2 50%,#e4e4e4)"></div>
<div style="left:1679.2px;top:739.0px;width:12px;height:10.6px;border:1.25px solid #a6a6a6;border-radius:0.8px"></div>
<div style="left:1682.2px;top:745.4px;width:6px;height:2px;background:#a9a9a9"></div>
<svg class="i" style="left:7px;top:150px;" width="20" height="20" viewBox="0 0 16 16"><defs><linearGradient id="g27_pl" x1="0" y1="0" x2="0" y2="1"><stop offset="0" stop-color="#6af06a"/><stop offset="0.5" stop-color="#17d117"/><stop offset="1" stop-color="#0c9c0c"/></linearGradient></defs><path d="M6.2 0.6h2.8q0.8 0 0.8 0.8v4.4h4.4q0.8 0 0.8 0.8v2.8q0 0.8-0.8 0.8H9.8v4.400q0 0.800-0.800 0.800H6.200q-0.800 0-0.800-0.800V10.200H1Q0.200 10.200 0.200 9.400V6.600q0-0.800 0.800-0.800h4.400V1.400q0-0.800 0.800-0.800z" fill="url(#g27_pl)" stroke="#0f8a0f" stroke-width="0.8" transform="translate(0.4,-0.3)"/></svg>
<svg class="i" style="left:36.5px;top:156.5px" width="10.5" height="6" viewBox="0 0 10 6"><path d="M0 0h10L5 6z" fill="#5f7fae"/></svg>
<svg class="i" style="left:55px;top:150px;" width="20" height="20" viewBox="0 0 16 16"><path d="M0.600 0.400H8.400V8L6.100 5.900C4.500 7.700 4.700 10.300 6.300 12.300L4.100 14.100C0.900 11 0.700 6.600 3.100 3.200Z" fill="#a2a2a2" stroke="#929292" stroke-width="0.7" stroke-linejoin="round"/><path d="M0.600 0.400H8.400V8L6.100 5.900C4.500 7.700 4.700 10.300 6.300 12.300L4.100 14.100C0.900 11 0.700 6.600 3.100 3.200Z" fill="#a2a2a2" stroke="#929292" stroke-width="0.7" stroke-linejoin="round" transform="rotate(180 8.100 7.600)"/></svg>
<svg class="i" style="left:83.5px;top:150px;" width="20" height="20" viewBox="0 0 16 16"><path d="M0.600 1h14.400v1.100L10 8v7H5.900V8L0.600 2.100z" fill="#a2a2a2" stroke="#949494" stroke-width="0.6" stroke-linejoin="round"/></svg>
<div style="left:108.5px;top:146.5px;width:27.5px;height:27px;background:#d6dde6;border:1px solid #c3ccd8;border-radius:3.5px"></div>
<svg class="i" style="left:112px;top:150px;" width="20" height="20" viewBox="0 0 16 16"><defs><linearGradient id="g30_sa" x1="0" y1="0" x2="0" y2="1"><stop offset="0" stop-color="#9fd4ff"/><stop offset="1" stop-color="#1c6cd8"/></linearGradient></defs><path d="M2.200 3.400h3.600v5.200h2.400L4 14.400-0.200 8.600h2.400z" fill="url(#g30_sa)" stroke="#0f3f9c" stroke-width="0.8" stroke-linejoin="round"/><rect x="10.2" y="0.600" width="4.800" height="3" fill="#2f8cf0" stroke="#0f4fb0" stroke-width="0.7"/><path d="M12.600 5.200l2.800 3.400H9.800z" fill="#52c83c" stroke="#1f8a1c" stroke-width="0.6"/><circle cx="12.600" cy="12.400" r="2.300" fill="#f47a2c" stroke="#cf4a14" stroke-width="0.6"/></svg>
<svg class="i" style="left:140.5px;top:150px;" width="20" height="20" viewBox="0 0 16 16"><rect x="0.8" y="0.8" width="9.4" height="8" rx="0.8" fill="#dcebff" stroke="#3a74d0" stroke-width="1"/><rect x="1.3" y="1.3" width="8.4" height="2.8" fill="#a8c8f8"/><path d="M2.4 5.400h6" stroke="#2a5fc4" stroke-width="1.6"/><rect x="5.6" y="6" width="9.6" height="8.8" rx="0.8" fill="#dcebff" stroke="#3a74d0" stroke-width="1"/><rect x="6.1" y="6.5" width="8.6" height="3.08" fill="#a8c8f8"/><path d="M7.600 11h5.600" stroke="#2a5fc4" stroke-width="1.800"/></svg>
<svg class="i" style="left:0.8px;top:749.8px;" width="20" height="20" viewBox="0 0 16 16"><defs><linearGradient id="g32_f" x1="0" y1="0" x2="0.4" y2="1"><stop offset="0" stop-color="#fffbd0"/><stop offset="1" stop-color="#f6e38a"/></linearGradient><linearGradient id="g32_r" x1="0" y1="0" x2="1" y2="1"><stop offset="0" stop-color="#9cf584"/><stop offset="1" stop-color="#129a16"/></linearGradient></defs><path d="M0.600 13.200V1.800q0-0.900 0.900-0.900h3.900l1.700 2h7q0.900 0 0.900 0.900v8.400q0 0.900-0.900 0.900H1.500q-0.900 0-0.900-0.900z" fill="url(#g32_f)" stroke="#c2900e" stroke-width="1.1"/><path d="M1.200 4.300h5.400" stroke="#d8aa2a" stroke-width="0.8"/><path d="M6.400 4.800h6.800v10.600H4.400V6.800z" fill="#e2e2fa" stroke="#5252b2" stroke-width="1.3" stroke-linejoin="round"/><path d="M5 5.600h7.600v2H5z" fill="#7474c8"/><path d="M6 10h3.600M6 12.200h3.600" stroke="#8a8ace" stroke-width="0.9" stroke-dasharray="1.2 0.6"/><path d="M10.200 8.800l5.400 3.200-5.400 3.400z" fill="url(#g32_r)" stroke="#0e7a12" stroke-width="0.6" stroke-linejoin="round"/></svg>
<span class="t" style="left:25px;top:751.04px;letter-spacing:-0.078px;">Todos los Informes</span>
<div class="dv" style="left:9.4px;top:771.0px;width:1.25px;height:109.0px;"></div>
<div class="dh" style="left:16px;top:781.65px;width:9px;height:1.25px;"></div>
<div class="ex" style="left:4.25px;top:776.5px"><i></i><b></b></div>
<svg class="i" style="left:26px;top:772.25px;" width="20" height="20" viewBox="0 0 16 16"><defs><linearGradient id="g33_f" x1="0" y1="0" x2="0" y2="1"><stop offset="0" stop-color="#f2d65a"/><stop offset="1" stop-color="#d9b32c"/></linearGradient></defs><path d="M0.500 13.800V6.200q0-0.600 0.600-0.600H12.400q0.600 0 0.600 0.600V9.400" fill="#e6d040" stroke="#8a7c1c" stroke-width="0.8"/><path d="M1.100 13.400V6.400" stroke="#f8ec60" stroke-width="0.9"/><rect x="1.800" y="3.400" width="9.400" height="6.200" rx="0.9" fill="#f4f4ff" stroke="#6a6ab4" stroke-width="0.9"/><path d="M3.800 5.700h5.200" stroke="#7c7cc8" stroke-width="1.1"/><path d="M0.700 13.900L5.500 8.900h10.300L11 13.900z" fill="url(#g33_f)" stroke="#8a7418" stroke-width="0.7" stroke-linejoin="round"/></svg>
<span class="t" style="left:50px;top:773.09px;letter-spacing:-0.181px;">Informes de Diccionario de Datos</span>
<div class="dh" style="left:16px;top:802.9px;width:9px;height:1.25px;"></div>
<div class="ex" style="left:4.25px;top:797.75px"><i></i><b></b></div>
<svg class="i" style="left:26px;top:793.5px;" width="20" height="20" viewBox="0 0 16 16"><defs><linearGradient id="g34_f" x1="0" y1="0" x2="0" y2="1"><stop offset="0" stop-color="#f2d65a"/><stop offset="1" stop-color="#d9b32c"/></linearGradient></defs><path d="M0.500 13.800V6.200q0-0.600 0.600-0.600H12.400q0.600 0 0.600 0.600V9.400" fill="#e6d040" stroke="#8a7c1c" stroke-width="0.8"/><path d="M1.100 13.400V6.400" stroke="#f8ec60" stroke-width="0.9"/><rect x="1.800" y="3.400" width="9.400" height="6.200" rx="0.9" fill="#f4f4ff" stroke="#6a6ab4" stroke-width="0.9"/><path d="M3.800 5.700h5.200" stroke="#7c7cc8" stroke-width="1.1"/><path d="M0.700 13.900L5.500 8.900h10.300L11 13.900z" fill="url(#g34_f)" stroke="#8a7418" stroke-width="0.7" stroke-linejoin="round"/></svg>
<span class="t" style="left:50px;top:794.34px;letter-spacing:-0.153px;">Informes Definidos por el Usuario</span>
<div class="dh" style="left:16px;top:824.15px;width:9px;height:1.25px;"></div>
<div class="ex" style="left:4.25px;top:819.0px"><i></i><b></b></div>
<svg class="i" style="left:26px;top:814.75px;" width="20" height="20" viewBox="0 0 16 16"><defs><linearGradient id="g35_f" x1="0" y1="0" x2="0" y2="1"><stop offset="0" stop-color="#f2d65a"/><stop offset="1" stop-color="#d9b32c"/></linearGradient></defs><path d="M0.500 13.800V6.200q0-0.600 0.600-0.600H12.400q0.600 0 0.600 0.600V9.400" fill="#e6d040" stroke="#8a7c1c" stroke-width="0.8"/><path d="M1.100 13.400V6.400" stroke="#f8ec60" stroke-width="0.9"/><rect x="1.800" y="3.400" width="9.400" height="6.200" rx="0.9" fill="#f4f4ff" stroke="#6a6ab4" stroke-width="0.9"/><path d="M3.800 5.700h5.200" stroke="#7c7cc8" stroke-width="1.1"/><path d="M0.700 13.900L5.500 8.900h10.300L11 13.900z" fill="url(#g35_f)" stroke="#8a7418" stroke-width="0.7" stroke-linejoin="round"/></svg>
<span class="t" style="left:50px;top:815.59px;letter-spacing:-0.142px;">Informes de Modelador de Datos</span>
<div class="dh" style="left:16px;top:845.4px;width:9px;height:1.25px;"></div>
<div class="ex" style="left:4.25px;top:840.25px"><i></i><b></b></div>
<svg class="i" style="left:26px;top:836.0px;" width="20" height="20" viewBox="0 0 16 16"><defs><linearGradient id="g36_f" x1="0" y1="0" x2="0" y2="1"><stop offset="0" stop-color="#f2d65a"/><stop offset="1" stop-color="#d9b32c"/></linearGradient></defs><path d="M0.500 13.800V6.200q0-0.600 0.600-0.600H12.400q0.600 0 0.600 0.600V9.400" fill="#e6d040" stroke="#8a7c1c" stroke-width="0.8"/><path d="M1.100 13.400V6.400" stroke="#f8ec60" stroke-width="0.9"/><rect x="1.800" y="3.400" width="9.400" height="6.200" rx="0.9" fill="#f4f4ff" stroke="#6a6ab4" stroke-width="0.9"/><path d="M3.800 5.700h5.200" stroke="#7c7cc8" stroke-width="1.1"/><path d="M0.700 13.900L5.500 8.900h10.300L11 13.900z" fill="url(#g36_f)" stroke="#8a7418" stroke-width="0.7" stroke-linejoin="round"/></svg>
<span class="t" style="left:50px;top:836.84px;letter-spacing:-0.319px;">Informes de OLAP</span>
<div class="dh" style="left:16px;top:866.65px;width:9px;height:1.25px;"></div>
<div class="ex" style="left:4.25px;top:861.5px"><i></i><b></b></div>
<svg class="i" style="left:26px;top:857.25px;" width="20" height="20" viewBox="0 0 16 16"><defs><linearGradient id="g37_f" x1="0" y1="0" x2="0" y2="1"><stop offset="0" stop-color="#f2d65a"/><stop offset="1" stop-color="#d9b32c"/></linearGradient></defs><path d="M0.500 13.800V6.200q0-0.600 0.600-0.600H12.400q0.600 0 0.600 0.600V9.400" fill="#e6d040" stroke="#8a7c1c" stroke-width="0.8"/><path d="M1.100 13.400V6.400" stroke="#f8ec60" stroke-width="0.9"/><rect x="1.800" y="3.400" width="9.400" height="6.200" rx="0.9" fill="#f4f4ff" stroke="#6a6ab4" stroke-width="0.9"/><path d="M3.800 5.700h5.200" stroke="#7c7cc8" stroke-width="1.1"/><path d="M0.700 13.900L5.500 8.900h10.300L11 13.900z" fill="url(#g37_f)" stroke="#8a7418" stroke-width="0.7" stroke-linejoin="round"/></svg>
<span class="t" style="left:50px;top:858.09px;letter-spacing:-0.138px;">Informes de TimesTen</span>
<div style="left:23px;top:886px;width:90px;height:22px;background:#a9c1dc;border-radius:2px 2px 0 0"></div>
<span class="t" style="left:34.5px;top:888.04px;letter-spacing:-0.211px;">Marcadores</span>
<svg class="i" style="left:5.5px;top:890.5px" width="15.5" height="13.5" viewBox="0 0 15.5 13.5"><g fill="none" stroke="#b9cde3" stroke-width="1.3"><rect x="0.7" y="0.7" width="9" height="7"/><rect x="5.5" y="5" width="9" height="7.5" fill="#9ab4d0"/></g></svg>
<span class="t" style="left:1288.5px;top:888.24px;color:#f2f6fa;">|</span>
<span class="t" style="left:1299px;top:888.24px;color:#f2f6fa;letter-spacing:-0.368px;">Línea 153 Columna 1</span>
<span class="t" style="left:1448.5px;top:888.24px;color:#f2f6fa;">|</span>
<span class="t" style="left:1459.3px;top:888.24px;color:#f2f6fa;letter-spacing:0.172px;">Insertar</span>
<span class="t" style="left:1536px;top:888.24px;color:#f2f6fa;">|</span>
<span class="t" style="left:1546.5px;top:888.24px;color:#f2f6fa;letter-spacing:-0.320px;">Modificado</span>
<span class="t" style="left:1613.5px;top:888.24px;color:#f2f6fa;">|</span>
<div style="left:1620px;top:886px;width:78.5px;height:22px;overflow:hidden">
<span class="t" style="left:4.75px;top:2.24px;color:#f2f6fa;letter-spacing:-0.298px;">Windows: CR</span>
</div>
<svg class="i" style="left:1692px;top:896px" width="13" height="12" viewBox="0 0 13 12"><path d="M13 1L2 12M13 6L7 12" stroke="#c9c9b9" stroke-width="1.6" fill="none"/></svg>
<div style="left:381px;top:116.6px;width:181.5px;height:27px;background:linear-gradient(#aac2dc,#a4bdd8);border-radius:4px 4px 0 0;border:1px solid #b2c7de;border-right-color:#8da8c6;border-bottom:none"></div>
<svg class="i" style="left:384.5px;top:120px;" width="19.5" height="19.5" viewBox="0 0 16 16"><defs><linearGradient id="g38_or" x1="0" y1="0" x2="0" y2="1"><stop offset="0" stop-color="#ff2a20"/><stop offset="1" stop-color="#f00808"/></linearGradient></defs><rect x="0.3" y="0.3" width="15.400" height="15.400" rx="0.700" fill="url(#g38_or)" stroke="#d20a0a" stroke-width="0.6"/><rect x="2.600" y="4.600" width="10.800" height="6.800" rx="3.400" fill="none" stroke="#fff" stroke-width="1.900"/></svg>
<span class="t" style="left:408.75px;top:122.14px;letter-spacing:-0.238px;">Página de bienvenida</span>
<svg class="i" style="left:547.5px;top:125px" width="8" height="8" viewBox="0 0 8 8"><path d="M1 1l6 6M7 1l-6 6" stroke="#dde7f2" stroke-width="1.5"/></svg>
<div style="left:565px;top:116.4px;width:151px;height:27.2px;background:linear-gradient(#fbd089 0,#fbd089 3.6px,#fff 3.7px,#fff 12.4px,#ececec 12.6px);border-radius:3.5px 3.5px 0 0"></div>
<svg class="i" style="left:569px;top:119.5px;" width="21" height="21" viewBox="0 0 16 16"><path d="M7 0.20000000000000018l3.48 2.0v4l-3.48 2.0l-3.48 -2.0v-4z" fill="#3fc42f" stroke="#2a9a1f" stroke-width="0.4"/><path d="M7 0.20000000000000018l3.48 2.0l-3.48 2.0l-3.48 -2.0z" fill="#9cf08c"/><path d="M7 4.2l3.48 -2.0v4l-3.48 2.0z" fill="#2a9a1f" opacity="0.55"/><path d="M11 5.6000000000000005l2.436 1.4v2.8l-2.436 1.4l-2.436 -1.4v-2.8z" fill="#3fc42f" stroke="#2a9a1f" stroke-width="0.4"/><path d="M11 5.6000000000000005l2.436 1.4l-2.436 1.4l-2.436 -1.4z" fill="#9cf08c"/><path d="M11 8.4l2.436 -1.4v2.8l-2.436 1.4z" fill="#2a9a1f" opacity="0.55"/><path d="M3.4 7.6000000000000005l2.7840000000000003 1.6v3.2l-2.7840000000000003 1.6l-2.7840000000000003 -1.6v-3.2z" fill="#3fc42f" stroke="#2a9a1f" stroke-width="0.4"/><path d="M3.4 7.6000000000000005l2.7840000000000003 1.6l-2.7840000000000003 1.6l-2.7840000000000003 -1.6z" fill="#9cf08c"/><path d="M3.4 10.8l2.7840000000000003 -1.6v3.2l-2.7840000000000003 1.6z" fill="#2a9a1f" opacity="0.55"/><rect x="3.6" y="8.4" width="11.8" height="7" fill="#fff" stroke="#555" stroke-width="0.7"/><text x="9.5" y="14.15" font-family="Liberation Sans, sans-serif" font-weight="bold" font-size="6.02" text-anchor="middle" fill="#1b2a66" textLength="10.200000000000001" lengthAdjust="spacingAndGlyphs">SQL</text></svg>
<span class="t" style="left:594.5px;top:122.14px;letter-spacing:-0.295px;font-style:italic;">BDConferencias</span>
<svg class="i" style="left:700.5px;top:125px" width="8" height="8" viewBox="0 0 8 8"><path d="M1 1l6 6M7 1l-6 6" stroke="#c9c9c9" stroke-width="1.4"/></svg>
<div style="left:1681.5px;top:120px;width:19px;height:19.5px;background:linear-gradient(#8ea8c6,#86a1c0);border-radius:3px;border:1px solid #8fa9c7"></div>
<svg class="i" style="left:1686px;top:127.5px" width="10" height="6" viewBox="0 0 10 6"><path d="M0 0h10L5 6z" fill="#dfe8f1"/></svg>
<div style="left:383px;top:147px;width:1315.5px;height:35px;background:linear-gradient(#e8e8e8,#fdfdfd 45%,#f4f4f4 75%,#e2e2e2)"></div>
<div style="left:383px;top:182.2px;width:1312px;height:1.6px;background:#8c8c8c"></div>
<div style="left:383px;top:183.8px;width:1312px;height:0.8px;background:#dcdcdc"></div>
<svg class="i" style="left:389px;top:153.5px;" width="20" height="20" viewBox="0 0 16 16"><defs><linearGradient id="g40_r" x1="0" y1="0" x2="0.8" y2="1"><stop offset="0" stop-color="#8cf07c"/><stop offset="0.5" stop-color="#2fc92f"/><stop offset="1" stop-color="#0e8f14"/></linearGradient></defs><path d="M1 1.600L13.800 8 1 14.400z" fill="url(#g40_r)" stroke="#0b7a10" stroke-width="0.9" stroke-linejoin="round"/></svg>
<svg class="i" style="left:418.5px;top:153.5px;" width="20" height="20" viewBox="0 0 16 16"><rect x="1.2" y="0.8" width="11.6" height="14" fill="#f4f4ff" stroke="#5555a0" stroke-width="1"/><path d="M2.5999999999999996 2.6h8.8" stroke="#8a8acc" stroke-width="0.9"/><path d="M2.5999999999999996 4.5h8.8" stroke="#8a8acc" stroke-width="0.9"/><path d="M2.5999999999999996 6.4h8.8" stroke="#8a8acc" stroke-width="0.9"/><path d="M2.5999999999999996 8.299999999999999h8.8" stroke="#8a8acc" stroke-width="0.9"/><path d="M2.5999999999999996 10.2h8.8" stroke="#8a8acc" stroke-width="0.9"/><path d="M2.5999999999999996 12.1h8.8" stroke="#8a8acc" stroke-width="0.9"/><defs><linearGradient id="g41_r" x1="0" y1="0" x2="0.8" y2="1"><stop offset="0" stop-color="#8cf07c"/><stop offset="1" stop-color="#0e8f14"/></linearGradient></defs><path d="M0.600 6.600L8.600 10.800 0.600 15z" fill="url(#g41_r)" stroke="#0b7a10" stroke-width="0.7" stroke-linejoin="round"/></svg>
<svg class="i" style="left:447px;top:153.5px;" width="20" height="20" viewBox="0 0 16 16"><defs><linearGradient id="g42_c" x1="0" y1="0" x2="1" y2="0"><stop offset="0" stop-color="#55558f"/><stop offset="0.3" stop-color="#b9b9e0"/><stop offset="0.45" stop-color="#ececfb"/><stop offset="0.7" stop-color="#8f8fc6"/><stop offset="1" stop-color="#4a4a86"/></linearGradient></defs><path d="M4.2 4.4v9.0a5.6 2.0 0 0 0 11.2 0v-9.0z" fill="url(#g42_c)" stroke="#4b4b85" stroke-width="0.6"/><ellipse cx="9.8" cy="4.4" rx="5.6" ry="2.0" fill="#c9c9ea" stroke="#4b4b85" stroke-width="0.6"/><path d="M4.2 7.4a5.6 2.0 0 0 0 11.2 0" fill="none" stroke="#45457e" stroke-width="0.7" opacity="0.8"/><path d="M4.2 10.4a5.6 2.0 0 0 0 11.2 0" fill="none" stroke="#45457e" stroke-width="0.7" opacity="0.8"/><path d="M2.600 3.200v9.400h2.800M2.600 7.600h2.800" fill="none" stroke="#555" stroke-width="0.9"/><rect x="0.4" y="0.4" width="4.2" height="3.200" rx="0.8" fill="#f0a030" stroke="#9c5a0c" stroke-width="0.7"/><rect x="1.2000000000000002" y="1.1" width="2.600" height="0.9" fill="#ffd890"/><rect x="5" y="5.6" width="4.2" height="3.200" rx="0.8" fill="#f0a030" stroke="#9c5a0c" stroke-width="0.7"/><rect x="5.8" y="6.3" width="2.600" height="0.9" fill="#ffd890"/><rect x="5" y="10.6" width="4.2" height="3.200" rx="0.8" fill="#f0a030" stroke="#9c5a0c" stroke-width="0.7"/><rect x="5.8" y="11.299999999999999" width="2.600" height="0.9" fill="#ffd890"/></svg>
<svg class="i" style="left:495.5px;top:153.5px;" width="20" height="20" viewBox="0 0 16 16"><defs><linearGradient id="g43_c" x1="0" y1="0" x2="1" y2="0"><stop offset="0" stop-color="#55558f"/><stop offset="0.3" stop-color="#b9b9e0"/><stop offset="0.45" stop-color="#ececfb"/><stop offset="0.7" stop-color="#8f8fc6"/><stop offset="1" stop-color="#4a4a86"/></linearGradient><linearGradient id="g43_r" x1="0" y1="0" x2="0.8" y2="1"><stop offset="0" stop-color="#8cf07c"/><stop offset="1" stop-color="#0e8f14"/></linearGradient></defs><path d="M4.6 4.4v9.0a5.4 2.0 0 0 0 10.8 0v-9.0z" fill="url(#g43_c)" stroke="#4b4b85" stroke-width="0.6"/><ellipse cx="10.0" cy="4.4" rx="5.4" ry="2.0" fill="#c9c9ea" stroke="#4b4b85" stroke-width="0.6"/><path d="M4.6 7.4a5.4 2.0 0 0 0 10.8 0" fill="none" stroke="#45457e" stroke-width="0.7" opacity="0.8"/><path d="M4.6 10.4a5.4 2.0 0 0 0 10.8 0" fill="none" stroke="#45457e" stroke-width="0.7" opacity="0.8"/><g transform="translate(1.4,0)"><path d="M2.600 3.200v9.400h2.800M2.600 7.600h2.800" fill="none" stroke="#555" stroke-width="0.9"/><rect x="0.4" y="0.4" width="4.2" height="3.200" rx="0.8" fill="#f0a030" stroke="#9c5a0c" stroke-width="0.7"/><rect x="1.2000000000000002" y="1.1" width="2.600" height="0.9" fill="#ffd890"/><rect x="5" y="5.6" width="4.2" height="3.200" rx="0.8" fill="#f0a030" stroke="#9c5a0c" stroke-width="0.7"/><rect x="5.8" y="6.3" width="2.600" height="0.9" fill="#ffd890"/><rect x="5" y="10.6" width="4.2" height="3.200" rx="0.8" fill="#f0a030" stroke="#9c5a0c" stroke-width="0.7"/><rect x="5.8" y="11.299999999999999" width="2.600" height="0.9" fill="#ffd890"/></g><path d="M0.200 7.400L7.800 11.400 0.200 15.400z" fill="url(#g43_r)" stroke="#0b7a10" stroke-width="0.6" opacity="0.92"/></svg>
<svg class="i" style="left:524.5px;top:153.5px;" width="20" height="20" viewBox="0 0 16 16"><defs><linearGradient id="g44_c" x1="0" y1="0" x2="1" y2="0"><stop offset="0" stop-color="#55558f"/><stop offset="0.3" stop-color="#b9b9e0"/><stop offset="0.45" stop-color="#ececfb"/><stop offset="0.7" stop-color="#8f8fc6"/><stop offset="1" stop-color="#4a4a86"/></linearGradient></defs><path d="M0.6 2.6v7.6a5.8 2.0 0 0 0 11.6 0v-7.6z" fill="url(#g44_c)" stroke="#4b4b85" stroke-width="0.6"/><ellipse cx="6.3999999999999995" cy="2.6" rx="5.8" ry="2.0" fill="#c9c9ea" stroke="#4b4b85" stroke-width="0.6"/><path d="M0.6 5.133333333333333a5.8 2.0 0 0 0 11.6 0" fill="none" stroke="#45457e" stroke-width="0.7" opacity="0.8"/><path d="M0.6 7.666666666666666a5.8 2.0 0 0 0 11.6 0" fill="none" stroke="#45457e" stroke-width="0.7" opacity="0.8"/><path d="M7.400 8.200a2.600 2.600 0 0 1 3.400-1.400l-1.400 1.600 0.600 1.400 1.600 0.200 1.200-1.600a2.600 2.600 0 0 1-2 3.400l3.800 3-1.400 1.400-3.600-3.400a2.600 2.600 0 0 1-2.600-2.600z" fill="#e4e4e4" stroke="#5a5a5a" stroke-width="0.8" stroke-linejoin="round"/></svg>
<svg class="i" style="left:565.5px;top:153.5px;" width="20" height="20" viewBox="0 0 16 16"><defs><linearGradient id="g45_c" x1="0" y1="0" x2="1" y2="0"><stop offset="0" stop-color="#55558f"/><stop offset="0.3" stop-color="#b9b9e0"/><stop offset="0.45" stop-color="#ececfb"/><stop offset="0.7" stop-color="#8f8fc6"/><stop offset="1" stop-color="#4a4a86"/></linearGradient></defs><path d="M0.6 2.4v8.0a5.7 2.0 0 0 0 11.4 0v-8.0z" fill="url(#g45_c)" stroke="#4b4b85" stroke-width="0.6"/><ellipse cx="6.3" cy="2.4" rx="5.7" ry="2.0" fill="#c9c9ea" stroke="#4b4b85" stroke-width="0.6"/><path d="M0.6 5.066666666666666a5.7 2.0 0 0 0 11.4 0" fill="none" stroke="#45457e" stroke-width="0.7" opacity="0.8"/><path d="M0.6 7.7333333333333325a5.7 2.0 0 0 0 11.4 0" fill="none" stroke="#45457e" stroke-width="0.7" opacity="0.8"/><path d="M4.600 9.800l2.200-1.800 2.200 2.800 4.600-5.400 2 1.800-6.600 7.800z" fill="#2fcf2f" stroke="#0e7f12" stroke-width="0.8" stroke-linejoin="round"/></svg>
<svg class="i" style="left:594.5px;top:153.5px;" width="20" height="20" viewBox="0 0 16 16"><defs><linearGradient id="g46_c" x1="0" y1="0" x2="1" y2="0"><stop offset="0" stop-color="#55558f"/><stop offset="0.3" stop-color="#b9b9e0"/><stop offset="0.45" stop-color="#ececfb"/><stop offset="0.7" stop-color="#8f8fc6"/><stop offset="1" stop-color="#4a4a86"/></linearGradient></defs><path d="M0.6 2.4v8.0a5.7 2.0 0 0 0 11.4 0v-8.0z" fill="url(#g46_c)" stroke="#4b4b85" stroke-width="0.6"/><ellipse cx="6.3" cy="2.4" rx="5.7" ry="2.0" fill="#c9c9ea" stroke="#4b4b85" stroke-width="0.6"/><path d="M0.6 5.066666666666666a5.7 2.0 0 0 0 11.4 0" fill="none" stroke="#45457e" stroke-width="0.7" opacity="0.8"/><path d="M0.6 7.7333333333333325a5.7 2.0 0 0 0 11.4 0" fill="none" stroke="#45457e" stroke-width="0.7" opacity="0.8"/><path d="M5.800 7.800v5.200h5.200l-1.800-1.600c1.800-1 3.600-0.200 3.600 1.600 0 1-0.600 1.800-1.600 2.800 2.600-0.600 4.200-2.200 4.200-4.200 0-3-3.800-4.400-7.200-2z" fill="#e8433a" stroke="#b0201a" stroke-width="0.7" stroke-linejoin="round"/></svg>
<svg class="i" style="left:636px;top:153.5px;" width="20" height="20" viewBox="0 0 16 16"><path d="M5 0.20000000000000018l3.306 1.9v3.8l-3.306 1.9l-3.306 -1.9v-3.8z" fill="#3fc42f" stroke="#2a9a1f" stroke-width="0.4"/><path d="M5 0.20000000000000018l3.306 1.9l-3.306 1.9l-3.306 -1.9z" fill="#9cf08c"/><path d="M5 4l3.306 -1.9v3.8l-3.306 1.9z" fill="#2a9a1f" opacity="0.55"/><path d="M3 8.2l2.7840000000000003 1.6v3.2l-2.7840000000000003 1.6l-2.7840000000000003 -1.6v-3.2z" fill="#3fc42f" stroke="#2a9a1f" stroke-width="0.4"/><path d="M3 8.2l2.7840000000000003 1.6l-2.7840000000000003 1.6l-2.7840000000000003 -1.6z" fill="#9cf08c"/><path d="M3 11.4l2.7840000000000003 -1.6v3.2l-2.7840000000000003 1.6z" fill="#2a9a1f" opacity="0.55"/><defs><radialGradient id="g47_s" cx="0.5" cy="0.5" r="0.6"><stop offset="0" stop-color="#fff6a0"/><stop offset="0.45" stop-color="#ffc41e"/><stop offset="1" stop-color="#e8400c"/></radialGradient></defs><circle cx="11.2" cy="4.200" r="3.900" fill="#e8320c"/><path d="M11.20 0.00 11.77 2.81 14.17 1.23 12.59 3.63 15.40 4.20 12.59 4.77 14.17 7.17 11.77 5.59 11.20 8.40 10.63 5.59 8.23 7.17 9.81 4.77 7.00 4.20 9.81 3.63 8.23 1.23 10.63 2.81z" fill="url(#g47_s)" stroke="#c8200c" stroke-width="0.4"/><rect x="3.2" y="8.4" width="12.4" height="7.2" fill="#fff" stroke="#555" stroke-width="0.7"/><text x="9.4" y="14.350000000000001" font-family="Liberation Sans, sans-serif" font-weight="bold" font-size="6.192" text-anchor="middle" fill="#1b2a66" textLength="10.8" lengthAdjust="spacingAndGlyphs">SQL</text></svg>
<svg class="i" style="left:664.5px;top:153.5px;" width="20" height="20" viewBox="0 0 16 16"><defs><linearGradient id="g48_e" x1="0" y1="0" x2="1" y2="1"><stop offset="0" stop-color="#ffb04a"/><stop offset="0.5" stop-color="#e8680c"/><stop offset="1" stop-color="#a84a08"/></linearGradient></defs><g transform="rotate(-40 8 8)"><rect x="-1" y="5" width="18" height="6.400" rx="1.200" fill="url(#g48_e)" stroke="#8a4208" stroke-width="0.7"/><rect x="5.400" y="5" width="5.600" height="6.400" fill="#c9c9c9"/><path d="M5.400 5v6.400M11 5v6.400" stroke="#777" stroke-width="0.6"/><rect x="6.400" y="5.400" width="1.400" height="5.600" fill="#f0f0f0"/><rect x="11" y="5.400" width="5.600" height="2" fill="#ffd070" opacity="0.8"/></g></svg>
<svg class="i" style="left:693px;top:153.5px;" width="20" height="20" viewBox="0 0 16 16"><rect x="5" y="0.6" width="10" height="12.6" fill="#f4f4ff" stroke="#5555a0" stroke-width="1"/><path d="M6.4 2.4h7.2" stroke="#8a8acc" stroke-width="0.9"/><path d="M6.4 4.3h7.2" stroke="#8a8acc" stroke-width="0.9"/><path d="M6.4 6.199999999999999h7.2" stroke="#8a8acc" stroke-width="0.9"/><path d="M6.4 8.1h7.2" stroke="#8a8acc" stroke-width="0.9"/><path d="M6.4 10.0h7.2" stroke="#8a8acc" stroke-width="0.9"/><defs><radialGradient id="g49_k" cx="0.5" cy="0.5" r="0.6"><stop offset="0" stop-color="#ffffff"/><stop offset="0.7" stop-color="#cfe6ff"/><stop offset="1" stop-color="#8cc0f8"/></radialGradient></defs><circle cx="5.800" cy="10" r="5.200" fill="url(#g49_k)" stroke="#2a7ae0" stroke-width="1.400"/><path d="M5.800 6.400v3.800h3" fill="none" stroke="#d02020" stroke-width="1"/></svg>
<svg class="i" style="left:722px;top:153.5px;" width="20" height="20" viewBox="0 0 16 16"><text x="8" y="9.400" font-family="Liberation Serif, serif" font-size="11.5" text-anchor="middle" fill="#5f5f5f" textLength="14" lengthAdjust="spacingAndGlyphs">Aa</text><path d="M3 12.600l3-2.400v1.600h5.600v-1.600l3 2.400-3 2.400v-1.600H6v1.600z" fill="#22b43a" stroke="#148424" stroke-width="0.4"/></svg>
<svg class="i" style="left:476.5px;top:161px" width="10.5" height="6" viewBox="0 0 10 6"><path d="M0 0h10L5 6z" fill="#5f7fae"/></svg>
<div style="left:556px;top:156.5px;width:1px;height:14px;background:#b0b0b0"></div>
<div style="left:626px;top:156.5px;width:1px;height:14px;background:#b0b0b0"></div>
<div style="left:753px;top:156.5px;width:1px;height:14px;background:#b0b0b0"></div>
<div style="left:1530px;top:151px;width:160.5px;height:26px;background:linear-gradient(#f3f3f3,#e4e4e4);border:1px solid #dadada;border-radius:3.5px"></div>
<svg class="i" style="left:1539.5px;top:153.5px;" width="20" height="20" viewBox="0 0 16 16"><defs><linearGradient id="g51_c" x1="0" y1="0" x2="1" y2="0"><stop offset="0" stop-color="#55558f"/><stop offset="0.3" stop-color="#b9b9e0"/><stop offset="0.45" stop-color="#ececfb"/><stop offset="0.7" stop-color="#8f8fc6"/><stop offset="1" stop-color="#4a4a86"/></linearGradient></defs><path d="M0.3 2.3v9.6a5.7 2.0 0 0 0 11.4 0v-9.6z" fill="url(#g51_c)" stroke="#4b4b85" stroke-width="0.6"/><ellipse cx="6.0" cy="2.3" rx="5.7" ry="2.0" fill="#c9c9ea" stroke="#4b4b85" stroke-width="0.6"/><path d="M0.3 5.5a5.7 2.0 0 0 0 11.4 0" fill="none" stroke="#45457e" stroke-width="0.7" opacity="0.8"/><path d="M0.3 8.7a5.7 2.0 0 0 0 11.4 0" fill="none" stroke="#45457e" stroke-width="0.7" opacity="0.8"/><path d="M4 8.7h3M4 11.3h3" stroke="#3a3a3a" stroke-width="2"/><path d="M4.3 8.700h2.700M4.300 11.300h2.700" stroke="#ffa424" stroke-width="1.200"/><path d="M6.800 7.200h3.200a2.800 2.800 0 0 1 0 5.600h-3.200z" fill="#f2f2f2" stroke="#2e2e2e" stroke-width="0.9"/><path d="M12.400 9.200h1.400q1.200 0 1.200 1.200v5.200" fill="none" stroke="#2a2a2a" stroke-width="2"/><path d="M12.600 9.200h1.200q1 0 1 1.200v5" fill="none" stroke="#a9a9a9" stroke-width="0.7"/></svg>
<span class="t" style="left:1565.5px;top:154.54px;color:#2b2bff;letter-spacing:-0.366px;">BDConferencias</span>
<svg class="i" style="left:1670.5px;top:161px" width="10" height="6" viewBox="0 0 10 6"><path d="M0 0h10L5 6z" fill="#5f7fae"/></svg>
<div style="left:383px;top:184px;width:1311px;height:27.5px;background:#ececec"></div>
<div style="left:1694.5px;top:183px;width:1.25px;height:540px;background:#d4d4d4"></div>
<div style="left:384.5px;top:185.4px;width:126.5px;height:26.1px;background:linear-gradient(#f8f8f8,#ececec 60%,#e6e6e6);border:1.25px solid #cfcfcf;border-bottom:none;border-radius:2px 2px 0 0"></div>
<span class="t" style="left:388.75px;top:189.74px;letter-spacing:-0.039px;">Hoja de Trabajo</span>
<span class="t" style="left:517.5px;top:190.94px;letter-spacing:-0.219px;">Generador de Consultas</span>
<div style="left:382.8px;top:183px;width:2.6px;height:529.8px;background:#9a9a9a"></div>
<div style="left:385px;top:211.2px;width:1293.5px;height:1.6px;background:#a0a0a0"></div>
<div style="left:385px;top:711.6px;width:1293.8px;height:1.5px;background:#8c8c8c"></div>
<div style="left:1677.8px;top:211.2px;width:1.4px;height:501px;background:#a0a0a0"></div>
<div style="left:385px;top:712.8px;width:1309.5px;height:10.7px;background:#ececec"></div>
<svg class="i" style="left:388.5px;top:714px" width="26" height="7" viewBox="0 0 26 7"><path d="M0 6.5L5.5 0L11 6.5zM14 0.5h12L20 7z" fill="#000"/></svg>
<div style="left:422.3px;top:212.8px;width:1.3px;height:498.5px;background:#ababab"></div>
<div style="left:1140.6px;top:212.8px;width:1.1px;height:498.5px;background:#c4c4c4"></div>
<div class="fd" style="left:437px;top:213px;width:1.25px;height:498px;"></div>
<div style="left:1661.5px;top:212.8px;width:16.3px;height:498.5px;background:linear-gradient(90deg,#f1f1f1,#fbfbfb 35%,#fbfbfb 65%,#f1f1f1)"></div>
<svg class="i" style="left:1664.65px;top:214.60000000000002px" width="10" height="6" viewBox="0 0 10 6"><path d="M0 6L5 0L10 6z" fill="#b4b4b4"/></svg>
<svg class="i" style="left:1664.65px;top:698.8px" width="10" height="6" viewBox="0 0 10 6"><path d="M0 0L5 6L10 0z" fill="#b4b4b4"/></svg>
<div style="left:1663.6px;top:229.5px;width:12.600000000000001px;height:70.5px;border:1.25px solid #a3bad5;border-radius:6.5px;background:linear-gradient(90deg,#bed1e7,#d6e3f1 50%,#bccfe5)"></div>
<div class="code" style="left:440.7px;top:217.68px;width:1215px;height:493.62px;overflow:hidden">
<div><span class="k">create</span> <span class="k">table</span> Sala (</div>
<div>    nombre      <span class="k">varchar2</span>(<span class="n">20</span>) <span class="k">primary</span> <span class="k">key</span>,</div>
<div>    capacidad   <span class="k">number</span>(<span class="n">4</span>) <span class="k">not</span> <span class="k">null</span></div>
<div>);</div>
<div> </div>
<div><span class="k">create</span> <span class="k">table</span> Conferencia (</div>
<div>    referencia  <span class="k">char</span>(<span class="n">7</span>) <span class="k">primary</span> <span class="k">key</span>,</div>
<div>    tema        <span class="k">varchar2</span>(<span class="n">60</span>),</div>
<div>    precio      <span class="k">number</span>(<span class="n">5</span>,<span class="n">2</span>),</div>
<div>    fecha       <span class="k">date</span> <span class="k">not</span> <span class="k">null</span>,</div>
<div>    turno       <span class="k">char</span>(<span class="n">1</span>) <span class="k">constraint</span> con_tur_CK <span class="k">check</span> (turno <span class="k">in</span> (<span class="s">&#x27;T&#x27;</span>,<span class="s">&#x27;M&#x27;</span>)),</div>
<div>    sala        <span class="k">varchar2</span>(<span class="n">20</span>) <span class="k">constraint</span> con_sal_FK <span class="k">references</span> Sala(Nombre) <span class="k">on</span> <span class="k">delete</span> <span class="k">cascade</span></div>
<div>);</div>
<div> </div>
<div><span class="k">create</span> <span class="k">table</span> Ponente (</div>
<div>    codigo      <span class="k">char</span>(<span class="n">6</span>) <span class="k">primary</span> <span class="k">key</span>,</div>
<div>    nombre      <span class="k">varchar2</span>(<span class="n">20</span>) <span class="k">not</span> <span class="k">null</span>,</div>
<div>    apellido1   <span class="k">varchar2</span>(<span class="n">20</span>) <span class="k">not</span> <span class="k">null</span>,</div>
<div>    apellido2   <span class="k">varchar2</span>(<span class="n">20</span>),</div>
<div>    especialidad    <span class="k">varchar2</span>(<span class="n">30</span>)</div>
<div>);</div>
<div> </div>
<div><span class="k">create</span> <span class="k">table</span> Participar (</div>
<div>    codPonente  <span class="k">char</span>(<span class="n">6</span>),</div>
</div>
<div class="fb" style="left:425px;top:220.50px"><i></i></div>
<div class="fb" style="left:425px;top:326.75px"><i></i></div>
<div class="fb" style="left:425px;top:518.00px"><i></i></div>
<div class="fb" style="left:425px;top:688.00px"><i></i></div>
<div style="left:380px;top:858.5px;width:80.7px;height:21.5px;background:#fff;border-right:1.5px solid #c4c4c4;border-bottom:1.2px solid #c9c9c9"></div>
<span class="t" style="left:385px;top:859.84px;letter-spacing:-0.320px;">Mensajes</span>
<div style="left:462px;top:857.8px;width:138.5px;height:21.8px;background:linear-gradient(#fde5a0,#fdeab2 40%,#fff5d8 80%,#fffaec);border:1px solid #f6e3ae;border-bottom:none;border-radius:2px 2px 0 0;box-shadow:1px 1px 0.5px #c9c6bc"></div>
<span class="t" style="left:467.5px;top:859.84px;letter-spacing:-0.247px;">Página de Registro</span>
<svg class="i" style="left:587.8px;top:863.5px" width="7" height="7" viewBox="0 0 7 7"><path d="M1 1l5 5M6 1l-5 5" stroke="#b9b6ae" stroke-width="1.1"/></svg>
<div style="left:602.5px;top:857.8px;width:90.5px;height:21.8px;background:linear-gradient(#fde5a0,#fdeab2 40%,#fff5d8 80%,#fffaec);border:1px solid #f6e3ae;border-bottom:none;border-radius:2px 2px 0 0;box-shadow:1px 1px 0.5px #c9c6bc"></div>
<span class="t" style="left:608px;top:859.84px;letter-spacing:-0.355px;">Sentencias</span>
<svg class="i" style="left:680.3px;top:863.5px" width="7" height="7" viewBox="0 0 7 7"><path d="M1 1l5 5M6 1l-5 5" stroke="#b9b6ae" stroke-width="1.1"/></svg>
<div style="left:1678.5px;top:859px;width:19px;height:18.5px;background:linear-gradient(#fdfdfd,#f1f1f1 45%,#dedede 50%,#e4e4e4);border-radius:3.5px;box-shadow:0 1px 1px #d0d0d0"></div>
<svg class="i" style="left:1682.5px;top:864.5px" width="10" height="6" viewBox="0 0 10 6"><path d="M0 0h10L5 6z" fill="#1d2f5e"/></svg>
<svg class="i" style="left:8px;top:6px;" width="18.5" height="18.5" viewBox="0 0 16 16"><rect x="0.8" y="0.8" width="11.4" height="13.4" rx="1" fill="#86a8e6" stroke="#6b90d8" stroke-width="0.8"/><path d="M1.4 4h10.2M1.4 7.2h10.2M1.4 10.4h10.2" stroke="#dbe6fa" stroke-width="1.2"/><path d="M4.6 4.2v9.6" stroke="#c7d7f5" stroke-width="0.7"/><defs><radialGradient id="g52_a" cx="0.4" cy="0.35" r="0.7"><stop offset="0" stop-color="#6be06b"/><stop offset="1" stop-color="#129a12"/></radialGradient></defs><circle cx="10.6" cy="10.8" r="4.6" fill="url(#g52_a)" stroke="#1c8f1c" stroke-width="0.5"/><path d="M9.2 8.4l4 2.4-4 2.4z" fill="#fff"/></svg>
<svg class="i" style="left:14.3px;top:73.5px;" width="20" height="20" viewBox="0 0 16 16"><defs><linearGradient id="g53_p" x1="0" y1="0" x2="1" y2="1"><stop offset="0" stop-color="#ffffff"/><stop offset="1" stop-color="#d0d0f0"/></linearGradient><radialGradient id="g53_s" cx="0.5" cy="0.5" r="0.6"><stop offset="0" stop-color="#fff6a0"/><stop offset="0.5" stop-color="#ffc41e"/><stop offset="1" stop-color="#e86a10"/></radialGradient></defs><path d="M1 1.2h11.6v13.6H1z" fill="url(#g53_p)" stroke="#5e5e96" stroke-width="1"/><circle cx="10.8" cy="4.2" r="3.3" fill="#d8420c"/><path d="M10.80 0.20 11.34 2.91 13.63 1.37 12.09 3.66 14.80 4.20 12.09 4.74 13.63 7.03 11.34 5.49 10.80 8.20 10.26 5.49 7.97 7.03 9.51 4.74 6.80 4.20 9.51 3.66 7.97 1.37 10.26 2.91z" fill="url(#g53_s)" stroke="#b83208" stroke-width="0.35"/></svg>
<svg class="i" style="left:43px;top:73px;" width="20" height="20" viewBox="0 0 16 16"><defs><linearGradient id="g54_o" x1="0" y1="0" x2="0" y2="1"><stop offset="0" stop-color="#fbf3a6"/><stop offset="1" stop-color="#e6d46a"/></linearGradient></defs><path d="M0.8 13V2.8q0-0.8 0.8-0.8h4l1.4 1.6h5.2q0.8 0 0.8 0.8V6" fill="#e9dc7e" stroke="#a99a3c" stroke-width="0.8"/><path d="M0.9 13.2l2.6-6.6q0.3-0.6 1-0.6h10.2q0.9 0 0.6 0.8l-2.4 6q-0.3 0.6-1 0.6H1.4q-0.7 0-0.5-0.2z" fill="url(#g54_o)" stroke="#a99a3c" stroke-width="0.8"/></svg>
<svg class="i" style="left:71.5px;top:73.5px;" width="20" height="20" viewBox="0 0 16 16"><defs><linearGradient id="g55_fl" x1="0" y1="0" x2="1" y2="1"><stop offset="0" stop-color="#8d8dd8"/><stop offset="1" stop-color="#4c4c9c"/></linearGradient></defs><g transform="translate(0.4,0.2) scale(1.0)"><path d="M0.6 1.4q0-0.8 0.8-0.8h11.8q0.8 0 0.8 0.8v11.8q0 0.8-0.8 0.8H2.2L0.6 12.4z" fill="url(#g55_fl)" stroke="#3e3e86" stroke-width="0.9"/><rect x="3" y="0.9" width="8.6" height="5.4" fill="#d3d3f2"/><rect x="3.4" y="8.2" width="8.2" height="5.4" fill="#fff"/><rect x="4.6" y="9.4" width="1.8" height="3.2" fill="#3e3e86"/></g></svg>
<svg class="i" style="left:100px;top:73.5px;" width="20" height="20" viewBox="0 0 16 16"><defs><linearGradient id="g56_fl" x1="0" y1="0" x2="1" y2="1"><stop offset="0" stop-color="#8d8dd8"/><stop offset="1" stop-color="#4c4c9c"/></linearGradient></defs><g transform="translate(3.6,0) scale(0.82)"><path d="M0.6 1.4q0-0.8 0.8-0.8h11.8q0.8 0 0.8 0.8v11.8q0 0.8-0.8 0.8H2.2L0.6 12.4z" fill="url(#g56_fl)" stroke="#3e3e86" stroke-width="0.9"/><rect x="3" y="0.9" width="8.6" height="5.4" fill="#d3d3f2"/><rect x="3.4" y="8.2" width="8.2" height="5.4" fill="#fff"/><rect x="4.6" y="9.4" width="1.8" height="3.2" fill="#3e3e86"/></g><g transform="translate(0.2,3.2) scale(0.82)"><path d="M0.6 1.4q0-0.8 0.8-0.8h11.8q0.8 0 0.8 0.8v11.8q0 0.8-0.8 0.8H2.2L0.6 12.4z" fill="url(#g56_fl)" stroke="#3e3e86" stroke-width="0.9"/><rect x="3" y="0.9" width="8.6" height="5.4" fill="#d3d3f2"/><rect x="3.4" y="8.2" width="8.2" height="5.4" fill="#fff"/><rect x="4.6" y="9.4" width="1.8" height="3.2" fill="#3e3e86"/></g></svg>
<svg class="i" style="left:146.5px;top:73px;" width="20" height="20" viewBox="0 0 16 16"><defs><linearGradient id="g57_u" x1="0" y1="0" x2="1" y2="1"><stop offset="0" stop-color="#7cc4ff"/><stop offset="1" stop-color="#1f6fd6"/></linearGradient></defs><path d="M0.8 2.2v6.4h6.4L5.2 6.6C7.6 5 10.4 6 10.4 8.6c0 2.2-1.4 4.2-3.6 6.4 4.6-1.8 7.6-4.6 7.6-8.2C14.4 2.4 8.8 0.4 3.6 4.4z" fill="url(#g57_u)" stroke="#1a55b4" stroke-width="0.9" stroke-linejoin="round"/></svg>
<svg class="i" style="left:176.5px;top:73px;" width="20" height="20" viewBox="0 0 16 16"><g transform="translate(16,0) scale(-1,1)"><path d="M0.8 2.2v6.4h6.4L5.2 6.6C7.6 5 10.4 6 10.4 8.6c0 2.2-1.4 4.2-3.6 6.4 4.6-1.8 7.6-4.6 7.6-8.2C14.4 2.4 8.8 0.4 3.6 4.4z" fill="#a9a9a9" stroke="#9a9a9a" stroke-width="0.9" stroke-linejoin="round"/></g></svg>
<svg class="i" style="left:221px;top:72.5px;" width="20" height="20" viewBox="0 0 16 16"><defs><radialGradient id="g59_b" cx="0.4" cy="0.35" r="0.7"><stop offset="0" stop-color="#7df07d"/><stop offset="0.5" stop-color="#17b417"/><stop offset="1" stop-color="#0a7a0a"/></radialGradient></defs><circle cx="8" cy="8" r="7.3" fill="url(#g59_b)" stroke="#0c6c0c" stroke-width="0.6"/><path d="M3 8l5-4.2v2.6h4.4v3.2H8v2.6z" fill="#fff"/></svg>
<svg class="i" style="left:270px;top:72.5px;" width="20" height="20" viewBox="0 0 16 16"><defs><radialGradient id="g60_b" cx="0.4" cy="0.35" r="0.7"><stop offset="0" stop-color="#d6d6d6"/><stop offset="0.5" stop-color="#9c9c9c"/><stop offset="1" stop-color="#707070"/></radialGradient></defs><circle cx="8" cy="8" r="7.3" fill="url(#g60_b)" stroke="#6c6c6c" stroke-width="0.6"/><path d="M13 8l-5-4.2v2.6H3.6v3.2H8v2.6z" fill="#fff"/></svg>
<svg class="i" style="left:336.5px;top:73.5px;" width="20" height="20" viewBox="0 0 16 16"><path d="M6.6 0.39999999999999947l3.8280000000000003 2.2v4.4l-3.8280000000000003 2.2l-3.8280000000000003 -2.2v-4.4z" fill="#3fc42f" stroke="#2a9a1f" stroke-width="0.4"/><path d="M6.6 0.39999999999999947l3.8280000000000003 2.2l-3.8280000000000003 2.2l-3.8280000000000003 -2.2z" fill="#9cf08c"/><path d="M6.6 4.8l3.8280000000000003 -2.2v4.4l-3.8280000000000003 2.2z" fill="#2a9a1f" opacity="0.55"/><path d="M11 6l2.61 1.5v3l-2.61 1.5l-2.61 -1.5v-3z" fill="#3fc42f" stroke="#2a9a1f" stroke-width="0.4"/><path d="M11 6l2.61 1.5l-2.61 1.5l-2.61 -1.5z" fill="#9cf08c"/><path d="M11 9l2.61 -1.5v3l-2.61 1.5z" fill="#2a9a1f" opacity="0.55"/><path d="M3.2 8.2l2.9579999999999997 1.7v3.4l-2.9579999999999997 1.7l-2.9579999999999997 -1.7v-3.4z" fill="#3fc42f" stroke="#2a9a1f" stroke-width="0.4"/><path d="M3.2 8.2l2.9579999999999997 1.7l-2.9579999999999997 1.7l-2.9579999999999997 -1.7z" fill="#9cf08c"/><path d="M3.2 11.6l2.9579999999999997 -1.7v3.4l-2.9579999999999997 1.7z" fill="#2a9a1f" opacity="0.55"/><rect x="3.8" y="8.6" width="11.8" height="7.2" fill="#fff" stroke="#555" stroke-width="0.7"/><text x="9.7" y="14.55" font-family="Liberation Sans, sans-serif" font-weight="bold" font-size="6.192" text-anchor="middle" fill="#1b2a66" textLength="10.200000000000001" lengthAdjust="spacingAndGlyphs">SQL</text></svg>
<svg class="i" style="left:402.8px;top:73px;" width="20" height="20" viewBox="0 0 16 16"><path d="M3.6 1.2h2.6l0.8 2h2l0.8-2h2.6l3.2 8.6v3.4h-6V5.6h-3.2v7.6h-6V9.8z" fill="#3a3a3a" stroke="#1c1c1c" stroke-width="0.6"/><path d="M4.2 2l-2.6 7.4M11.8 2l2.6 7.4" stroke="#8c8c8c" stroke-width="0.8"/><rect x="6" y="3.4" width="4" height="1.6" fill="#222"/><defs><radialGradient id="g62_l" cx="0.4" cy="0.3" r="0.8"><stop offset="0" stop-color="#6fc2ff"/><stop offset="0.6" stop-color="#0f76ea"/><stop offset="1" stop-color="#0a4fb0"/></radialGradient></defs><ellipse cx="3.6" cy="11.4" rx="3.2" ry="2.9" fill="url(#g62_l)" stroke="#10325e" stroke-width="0.5"/><ellipse cx="12.4" cy="11.4" rx="3.2" ry="2.9" fill="url(#g62_l)" stroke="#10325e" stroke-width="0.5"/></svg>
<svg class="i" style="left:251.5px;top:80.5px" width="10" height="6" viewBox="0 0 10 6"><path d="M0 0h10L5 6z" fill="#c3d8ee"/></svg>
<svg class="i" style="left:300.5px;top:80.5px" width="10" height="6" viewBox="0 0 10 6"><path d="M0 0h10L5 6z" fill="#6e6e6e"/></svg>
<svg class="i" style="left:366.5px;top:80.5px" width="10" height="6" viewBox="0 0 10 6"><path d="M0 0h10L5 6z" fill="#c3d8ee"/></svg>
</body></html>
